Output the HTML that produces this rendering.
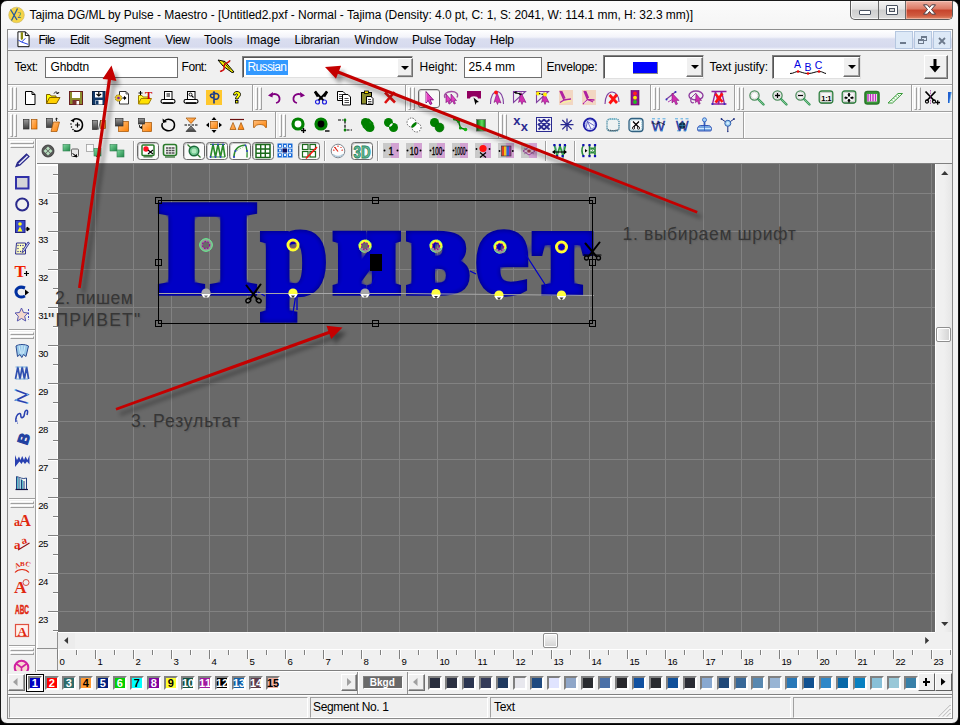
<!DOCTYPE html><html lang="ru"><head><meta charset="utf-8"><title>Tajima DG/ML by Pulse - Maestro</title><style>
*{box-sizing:border-box;margin:0;padding:0}
html,body{width:960px;height:725px;overflow:hidden;background:#000}
body{font-family:"Liberation Sans",sans-serif;font-size:12px;color:#000;position:relative}
.a{position:absolute}
.t{position:absolute;white-space:nowrap;line-height:1}
#win{position:absolute;left:0;top:0;width:960px;height:725px;background:#000}
#frame{position:absolute;left:0;top:0;width:959px;height:724px;border:1px solid #1a1a1a;border-radius:7px 7px 7px 7px;background:linear-gradient(#fbfbfb,#f4f4f4 30px,#f2f2f2);overflow:hidden}
#client{position:absolute;left:8px;top:30px;width:944px;height:688px;background:#f0f0f0}
.sunk{border:1px solid;border-color:#a0a0a0 #fff #fff #a0a0a0}
.rais{border:1px solid;border-color:#fff #a0a0a0 #a0a0a0 #fff}
.inp{position:absolute;background:#fff;border:1px solid #6e6e6e}
.cmb{position:absolute;background:#fff;border:1px solid;border-color:#808080 #e0e0e0 #e0e0e0 #808080;box-shadow:inset 1px 1px 0 #555}
.ddb{position:absolute;background:#f0f0f0;border:1px solid;border-color:#fff #707070 #707070 #fff;box-shadow:inset -1px -1px 0 #a0a0a0}
.ddb:after{content:"";position:absolute;left:50%;top:50%;margin:-2px 0 0 -4px;border:4px solid transparent;border-top:4px solid #000;border-bottom:0}
.hl{position:absolute;height:2px;border-top:1px solid #a0a0a0;border-bottom:1px solid #fff}
.vl{position:absolute;width:2px;border-left:1px solid #a0a0a0;border-right:1px solid #fff}
.grip{position:absolute;width:5px;border-left:1px solid #fff;border-right:1px solid #a0a0a0}
.grip:before{content:"";position:absolute;left:1px;top:0;bottom:0;width:1px;background:#a0a0a0}
.grip:after{content:"";position:absolute;left:1px;top:0;bottom:0;width:0}
svg{position:absolute;overflow:visible}
.privet{position:absolute;left:158.5px;top:167.9px;white-space:nowrap;font-family:"Liberation Serif",serif;font-weight:bold;font-size:124px;line-height:160px;height:160px;color:#00009a;-webkit-text-stroke:7.5px #00009a;letter-spacing:6.3px;transform:scaleX(0.945);transform-origin:0 0;paint-order:stroke fill}
.privet::first-letter{font-size:132px}
</style></head><body><div id="win"><div id="frame"></div><div class="t" style="left:29.5px;top:9px;font-size:12px;color:#000;letter-spacing:-0.034px">Tajima DG/ML by Pulse - Maestro - [Untitled2.pxf - Normal - Tajima (Density: 4.0 pt, C: 1, S: 2041, W: 114.1 mm, H: 32.3 mm)]</div><div id="client"></div><div class="a" style="left:7px;top:29px;width:946px;height:690px;border:1px solid #8a8a8a;border-top-color:#8e8e8e"></div><svg style="left:8px;top:6px" width="18" height="18" viewBox="0 0 18 18"><circle cx="8.500" cy="9" r="7.800" fill="#f5d447" stroke="#c9b45a" stroke-width="0.600"/><path d="M2.500 3.500L9 14M9.500 2.500L3.500 14.500" stroke="#2a5a9a" stroke-width="1.300" fill="none"/><text x="9.300" y="12" font-family="Liberation Serif,serif" font-size="7.500" fill="#2a5a9a">2</text></svg><div class="a" style="left:850px;top:1px;width:103px;height:19px;border:1px solid #5a5a5a;border-top:0;border-radius:0 0 5px 5px;background:linear-gradient(#f4f4f4,#e2e2e2 45%,#cfcfcf 50%,#dcdcdc 100%);box-shadow:inset 0 0 0 1px rgba(255,255,255,.7);overflow:hidden"><div class="a" style="left:27px;top:0;width:1px;height:18px;background:#6a6a6a"></div><div class="a" style="left:54px;top:0;width:1px;height:18px;background:#6a6a6a"></div><div class="a" style="left:55px;top:0;width:47px;height:18px;background:linear-gradient(#eeb0a2,#dc7863 45%,#c6432c 50%,#cf5a3f 80%,#e08a6a 100%);box-shadow:inset 0 0 0 1px rgba(255,220,210,.5)"></div></div><div class="a" style="left:859px;top:10px;width:12px;height:5px;background:#fff;border:1px solid #4a5260;border-radius:1px"></div><div class="a" style="left:886px;top:5px;width:12px;height:10px;background:#fdfdfd;border:1px solid #4a5260;border-radius:1px"></div><div class="a" style="left:889px;top:8px;width:6px;height:4px;background:#d8d8d8;border:1px solid #4a5260"></div><svg style="left:923px;top:4px" width="13" height="11" viewBox="0 0 13 11"><path d="M0.500 0.800h3.800l2.200 2.700 2.200-2.700h3.800l-4 4.700 4 4.700h-3.800l-2.200-2.700-2.200 2.700h-3.800l4-4.700z" fill="#fff" stroke="#4a3a40" stroke-width="1" stroke-linejoin="round"/></svg><div class="a" style="left:8px;top:29px;width:944px;height:1px;background:#8e8e8e"></div><div class="a" style="left:8px;top:30px;width:944px;height:20px;background:linear-gradient(#ffffff 0,#f3f4fa 35%,#dadef0 45%,#d6daee 85%,#f0f2fa 96%,#ffffff 100%)"></div><div class="a" style="left:8px;top:50px;width:944px;height:1px;background:#909090"></div><div class="t" style="left:38.5px;top:33.8px;font-size:12px;letter-spacing:-0.779px;color:#000;">File</div><div class="t" style="left:70.0px;top:33.8px;font-size:12px;letter-spacing:-0.393px;color:#000;">Edit</div><div class="t" style="left:104.0px;top:33.8px;font-size:12px;letter-spacing:-0.255px;color:#000;">Segment</div><div class="t" style="left:165.3px;top:33.8px;font-size:12px;letter-spacing:-0.431px;color:#000;">View</div><div class="t" style="left:204.0px;top:33.8px;font-size:12px;letter-spacing:0.122px;color:#000;">Tools</div><div class="t" style="left:246.6px;top:33.8px;font-size:12px;letter-spacing:0.037px;color:#000;">Image</div><div class="t" style="left:294.6px;top:33.8px;font-size:12px;letter-spacing:-0.212px;color:#000;">Librarian</div><div class="t" style="left:354.4px;top:33.8px;font-size:12px;letter-spacing:0.164px;color:#000;">Window</div><div class="t" style="left:412.0px;top:33.8px;font-size:12px;letter-spacing:-0.166px;color:#000;">Pulse Today</div><div class="t" style="left:490.0px;top:33.8px;font-size:12px;letter-spacing:-0.227px;color:#000;">Help</div><svg style="left:16.500px;top:30.500px" width="13" height="16.500" viewBox="0 0 14 17"><path d="M1 0.500h8l4 4v12H1z" fill="#fff" stroke="#000" stroke-width="1"/><path d="M9 0.500v4h4" fill="none" stroke="#000" stroke-width="1"/><path d="M4 1h2.500v7L5 9.500 4 8z" fill="#8a8a10"/><path d="M1.500 9.500L5 11.500 9 7.500M5 11.500L12 14" stroke="#1030e0" stroke-width="1" fill="none"/></svg><div class="a" style="left:895px;top:31px;width:18px;height:18px;background:#dde9f7;border:1px solid #b5c7e0"></div><div class="a" style="left:914px;top:31px;width:18px;height:18px;background:#dde9f7;border:1px solid #b5c7e0"></div><div class="a" style="left:933px;top:31px;width:18px;height:18px;background:#dde9f7;border:1px solid #b5c7e0"></div><div class="a" style="left:900px;top:42px;width:6px;height:2px;background:#6d7a8c"></div><div class="a" style="left:921px;top:36px;width:6px;height:5px;border:1px solid #6d7a8c;border-top-width:2px"></div><div class="a" style="left:918px;top:39px;width:6px;height:5px;border:1px solid #6d7a8c;border-top-width:2px;background:#dde9f7"></div><svg style="left:938px;top:37px" width="8" height="8" viewBox="0 0 8 8"><path d="M1 1L7 7M7 1L1 7" stroke="#6d7a8c" stroke-width="1.8" fill="none"/></svg><div class="t" style="left:14.5px;top:61.3px;font-size:12px;letter-spacing:-0.410px;color:#000;">Text:</div><div class="inp" style="left:45px;top:57px;width:133px;height:21px;"></div><div class="t" style="left:50.6px;top:60.5px;font-size:12px;letter-spacing:-0.173px;color:#000;">Ghbdtn</div><div class="t" style="left:181.5px;top:61.3px;font-size:12px;letter-spacing:-0.436px;color:#000;">Font:</div><svg style="left:217px;top:58px" width="18" height="16" viewBox="0 0 18 16"><path d="M1 2l7 1.500 9 10.500-2 0.500-9-6.500z" fill="#f4f000" stroke="#000" stroke-width="1"/><path d="M6 3.500l7 8" stroke="#000" stroke-width="0.800"/><path d="M13 2.500c-2 3-6.500 3-6 6s0 4-4 5" fill="none" stroke="#f01010" stroke-width="1.500"/><path d="M13 2.500c-2 3-6.500 3-6 6s0 4-4 5" fill="none" stroke="#000" stroke-width="0.800" stroke-dasharray="1 2.500"/></svg><div class="cmb" style="left:242px;top:56px;width:171px;height:22px;"></div><div class="a" style="left:246px;top:60px;width:42px;height:15px;background:#3399ff"></div><div class="t" style="left:247.5px;top:60.5px;font-size:12px;letter-spacing:-0.642px;color:#fff;">Russian</div><div class="ddb" style="left:397px;top:58px;width:16px;height:19px;"></div><div class="t" style="left:419.5px;top:61.3px;font-size:12px;letter-spacing:-0.004px;color:#000;">Height:</div><div class="inp" style="left:464px;top:57px;width:78px;height:21px;"></div><div class="t" style="left:468.5px;top:60.5px;font-size:12px;letter-spacing:-0.030px;color:#000;">25.4 mm</div><div class="t" style="left:546.5px;top:61.3px;font-size:12px;letter-spacing:-0.297px;color:#000;">Envelope:</div><div class="cmb" style="left:603px;top:55px;width:101px;height:24px;"></div><div class="a" style="left:633px;top:62px;width:25px;height:12px;background:#0000ff;border-right:1px solid #888;border-bottom:1px solid #888"></div><div class="ddb" style="left:686px;top:57px;width:17px;height:20px;"></div><div class="t" style="left:709.5px;top:61.3px;font-size:12px;letter-spacing:-0.071px;color:#000;">Text justify:</div><div class="cmb" style="left:772px;top:55px;width:89px;height:24px;"></div><div class="ddb" style="left:843px;top:57px;width:17px;height:20px;"></div><div class="t" style="left:794.0px;top:59.3px;font-size:10.5px;color:#0000e0;">A</div><div class="t" style="left:804.5px;top:61.9px;font-size:10.5px;color:#0000e0;">B</div><div class="t" style="left:814.7px;top:59.6px;font-size:10.5px;color:#0000e0;">C</div><svg style="left:788px;top:68px" width="40" height="10" viewBox="0 0 40 10"><path d="M2 5.500C6 5.500 7 3.500 10 3.500S15 5.500 20 5.500S27 3.500 31 3.500S35 5 38 5.500" stroke="#000" stroke-width="1" fill="none"/><circle cx="10" cy="3.5" r="1.3" fill="#e00"/><circle cx="20" cy="5.5" r="1.3" fill="#e00"/><circle cx="31" cy="3.500" r="1.300" fill="#e00"/></svg><div class="a" style="left:924px;top:55px;width:24px;height:24px;background:#f0f0f0;border:1px solid;border-color:#fff #696969 #696969 #fff;box-shadow:inset -1px -1px 0 #a0a0a0"></div><svg style="left:929px;top:59px" width="12" height="14" viewBox="0 0 12 14"><path d="M4.5 0h3v7h4L6 13.5 0.500 7h4z" fill="#000"/></svg><div class="a" style="left:8px;top:84px;width:944px;height:1px;background:#a0a0a0"></div><div class="a" style="left:8px;top:85px;width:944px;height:1px;background:#fff"></div><div class="a" style="left:8px;top:111px;width:944px;height:1px;background:#a0a0a0"></div><div class="a" style="left:8px;top:112px;width:944px;height:1px;background:#fff"></div><div class="a" style="left:8px;top:138px;width:944px;height:1px;background:#a0a0a0"></div><div class="a" style="left:8px;top:139px;width:944px;height:1px;background:#fff"></div><div class="a" style="left:8px;top:674px;width:17px;height:17px;background:#f0f0f0;border:1px solid;border-color:#fff #707070 #707070 #fff;box-shadow:inset -1px -1px 0 #a0a0a0"></div><svg style="left:13px;top:677.500px" width="4.500" height="8" viewBox="0 0 5 9"><path d="M5 0L0 4.500L5 9z" fill="#a0a0a0"/></svg><div class="a" style="left:28px;top:676px;width:14px;height:14px;background:#0000c0;border:2px solid;border-color:#808080 #fff #fff #808080"></div><div class="t" style="left:31.8px;top:677.9px;font-size:11px;color:#fff;font-weight:bold;">1</div><div class="a" style="left:45px;top:676px;width:14px;height:14px;background:#ff0000;border:2px solid;border-color:#808080 #fff #fff #808080"></div><div class="t" style="left:48.8px;top:677.9px;font-size:11px;color:#fff;font-weight:bold;">2</div><div class="a" style="left:62px;top:676px;width:14px;height:14px;background:#2d6b6b;border:2px solid;border-color:#808080 #fff #fff #808080"></div><div class="t" style="left:65.8px;top:677.9px;font-size:11px;color:#fff;font-weight:bold;">3</div><div class="a" style="left:79px;top:676px;width:14px;height:14px;background:#ff9933;border:2px solid;border-color:#808080 #fff #fff #808080"></div><div class="t" style="left:82.8px;top:677.9px;font-size:11px;color:#000;font-weight:bold;">4</div><div class="a" style="left:96px;top:676px;width:14px;height:14px;background:#002080;border:2px solid;border-color:#808080 #fff #fff #808080"></div><div class="t" style="left:99.8px;top:677.9px;font-size:11px;color:#fff;font-weight:bold;">5</div><div class="a" style="left:113px;top:676px;width:14px;height:14px;background:#00d000;border:2px solid;border-color:#808080 #fff #fff #808080"></div><div class="t" style="left:116.8px;top:677.9px;font-size:11px;color:#fff;font-weight:bold;">6</div><div class="a" style="left:130px;top:676px;width:14px;height:14px;background:#00ffff;border:2px solid;border-color:#808080 #fff #fff #808080"></div><div class="t" style="left:133.8px;top:677.9px;font-size:11px;color:#000;font-weight:bold;">7</div><div class="a" style="left:147px;top:676px;width:14px;height:14px;background:#8000a0;border:2px solid;border-color:#808080 #fff #fff #808080"></div><div class="t" style="left:150.8px;top:677.9px;font-size:11px;color:#fff;font-weight:bold;">8</div><div class="a" style="left:164px;top:676px;width:14px;height:14px;background:#ffff30;border:2px solid;border-color:#808080 #fff #fff #808080"></div><div class="t" style="left:167.8px;top:677.9px;font-size:11px;color:#000;font-weight:bold;">9</div><div class="a" style="left:181px;top:676px;width:14px;height:14px;background:#0f5040;border:2px solid;border-color:#808080 #fff #fff #808080"></div><div class="t" style="left:182.0px;top:677.9px;font-size:11px;letter-spacing:-0.236px;color:#fff;font-weight:bold;">10</div><div class="a" style="left:198px;top:676px;width:14px;height:14px;background:#a018a0;border:2px solid;border-color:#808080 #fff #fff #808080"></div><div class="t" style="left:199.0px;top:677.9px;font-size:11px;letter-spacing:0.370px;color:#fff;font-weight:bold;">11</div><div class="a" style="left:215px;top:676px;width:14px;height:14px;background:#000000;border:2px solid;border-color:#808080 #fff #fff #808080"></div><div class="t" style="left:216.0px;top:677.9px;font-size:11px;letter-spacing:-0.236px;color:#fff;font-weight:bold;">12</div><div class="a" style="left:232px;top:676px;width:14px;height:14px;background:#1060a8;border:2px solid;border-color:#808080 #fff #fff #808080"></div><div class="t" style="left:233.0px;top:677.9px;font-size:11px;letter-spacing:-0.236px;color:#fff;font-weight:bold;">13</div><div class="a" style="left:249px;top:676px;width:14px;height:14px;background:#5c3c4c;border:2px solid;border-color:#808080 #fff #fff #808080"></div><div class="t" style="left:250.0px;top:677.9px;font-size:11px;letter-spacing:-0.236px;color:#fff;font-weight:bold;">14</div><div class="a" style="left:266px;top:676px;width:14px;height:14px;background:#f0b0a0;border:2px solid;border-color:#808080 #fff #fff #808080"></div><div class="t" style="left:267.0px;top:677.9px;font-size:11px;letter-spacing:-0.236px;color:#000;font-weight:bold;">15</div><div class="a" style="left:26px;top:674px;width:18px;height:18px;border:1px solid #000"></div><div class="a" style="left:27px;top:675px;width:16px;height:16px;border:1px solid #fff"></div><div class="a" style="left:341px;top:674px;width:16px;height:17px;background:#f0f0f0;border:1px solid;border-color:#fff #707070 #707070 #fff;box-shadow:inset -1px -1px 0 #a0a0a0"></div><svg style="left:347px;top:677.500px" width="4.500" height="8" viewBox="0 0 5 9"><path d="M0 0L5 4.500L0 9z" fill="#a0a0a0"/></svg><div class="a" style="left:357px;top:672px;width:1px;height:22px;background:#909090"></div><div class="a" style="left:358px;top:672px;width:1px;height:22px;background:#fff"></div><div class="a" style="left:363px;top:676px;width:40px;height:13px;background:#696969;border:1px solid;border-color:#808080 #fff #fff #808080"></div><div class="t" style="left:369.8px;top:678.1px;font-size:10px;letter-spacing:0.000px;color:#fff;font-weight:bold;">Bkgd</div><div class="a" style="left:407px;top:672px;width:1px;height:22px;background:#909090"></div><div class="a" style="left:408px;top:674px;width:17px;height:17px;background:#f0f0f0;border:1px solid;border-color:#fff #707070 #707070 #fff;box-shadow:inset -1px -1px 0 #a0a0a0"></div><svg style="left:413px;top:677.500px" width="4.500" height="8" viewBox="0 0 5 9"><path d="M5 0L0 4.500L5 9z" fill="#a0a0a0"/></svg><div class="a" style="left:428px;top:676px;width:14px;height:14px;background:#2a2f3f;border:2px solid;border-color:#808080 #fff #fff #808080"></div><div class="a" style="left:445px;top:676px;width:14px;height:14px;background:#2c3142;border:2px solid;border-color:#808080 #fff #fff #808080"></div><div class="a" style="left:462px;top:676px;width:14px;height:14px;background:#2a3450;border:2px solid;border-color:#808080 #fff #fff #808080"></div><div class="a" style="left:479px;top:676px;width:14px;height:14px;background:#353c5a;border:2px solid;border-color:#808080 #fff #fff #808080"></div><div class="a" style="left:496px;top:676px;width:14px;height:14px;background:#203a60;border:2px solid;border-color:#808080 #fff #fff #808080"></div><div class="a" style="left:513px;top:676px;width:14px;height:14px;background:#e8e8ee;border:2px solid;border-color:#808080 #fff #fff #808080"></div><div class="a" style="left:530px;top:676px;width:14px;height:14px;background:#1f4a80;border:2px solid;border-color:#808080 #fff #fff #808080"></div><div class="a" style="left:547px;top:676px;width:14px;height:14px;background:#e0e4ff;border:2px solid;border-color:#808080 #fff #fff #808080"></div><div class="a" style="left:564px;top:676px;width:14px;height:14px;background:#8fa6c8;border:2px solid;border-color:#808080 #fff #fff #808080"></div><div class="a" style="left:581px;top:676px;width:14px;height:14px;background:#2a2c30;border:2px solid;border-color:#808080 #fff #fff #808080"></div><div class="a" style="left:598px;top:676px;width:14px;height:14px;background:#4a70a8;border:2px solid;border-color:#808080 #fff #fff #808080"></div><div class="a" style="left:615px;top:676px;width:14px;height:14px;background:#28282c;border:2px solid;border-color:#808080 #fff #fff #808080"></div><div class="a" style="left:632px;top:676px;width:14px;height:14px;background:#1050a0;border:2px solid;border-color:#808080 #fff #fff #808080"></div><div class="a" style="left:649px;top:676px;width:14px;height:14px;background:#2a2c30;border:2px solid;border-color:#808080 #fff #fff #808080"></div><div class="a" style="left:666px;top:676px;width:14px;height:14px;background:#10509a;border:2px solid;border-color:#808080 #fff #fff #808080"></div><div class="a" style="left:683px;top:676px;width:14px;height:14px;background:#2a2c34;border:2px solid;border-color:#808080 #fff #fff #808080"></div><div class="a" style="left:700px;top:676px;width:14px;height:14px;background:#88a8d0;border:2px solid;border-color:#808080 #fff #fff #808080"></div><div class="a" style="left:717px;top:676px;width:14px;height:14px;background:#204878;border:2px solid;border-color:#808080 #fff #fff #808080"></div><div class="a" style="left:734px;top:676px;width:14px;height:14px;background:#386898;border:2px solid;border-color:#808080 #fff #fff #808080"></div><div class="a" style="left:751px;top:676px;width:14px;height:14px;background:#5888b0;border:2px solid;border-color:#808080 #fff #fff #808080"></div><div class="a" style="left:768px;top:676px;width:14px;height:14px;background:#98b4d4;border:2px solid;border-color:#808080 #fff #fff #808080"></div><div class="a" style="left:785px;top:676px;width:14px;height:14px;background:#2878b8;border:2px solid;border-color:#808080 #fff #fff #808080"></div><div class="a" style="left:802px;top:676px;width:14px;height:14px;background:#105090;border:2px solid;border-color:#808080 #fff #fff #808080"></div><div class="a" style="left:819px;top:676px;width:14px;height:14px;background:#3088c8;border:2px solid;border-color:#808080 #fff #fff #808080"></div><div class="a" style="left:836px;top:676px;width:14px;height:14px;background:#0868a8;border:2px solid;border-color:#808080 #fff #fff #808080"></div><div class="a" style="left:853px;top:676px;width:14px;height:14px;background:#0880c0;border:2px solid;border-color:#808080 #fff #fff #808080"></div><div class="a" style="left:870px;top:676px;width:14px;height:14px;background:#88c0d8;border:2px solid;border-color:#808080 #fff #fff #808080"></div><div class="a" style="left:887px;top:676px;width:14px;height:14px;background:#98c8d8;border:2px solid;border-color:#808080 #fff #fff #808080"></div><div class="a" style="left:904px;top:676px;width:14px;height:14px;background:#3880a8;border:2px solid;border-color:#808080 #fff #fff #808080"></div><div class="a" style="left:918px;top:673px;width:17px;height:18px;background:#f0f0f0;border:1px solid;border-color:#fff #606060 #606060 #fff"></div><div class="a" style="left:922.5px;top:681px;width:7px;height:2px;background:#000"></div><div class="a" style="left:925px;top:678px;width:2px;height:8px;background:#000"></div><div class="a" style="left:935px;top:673px;width:17px;height:18px;background:#f0f0f0;border:1px solid;border-color:#fff #606060 #606060 #fff"></div><svg style="left:940.500px;top:678px" width="4.500" height="7.500" viewBox="0 0 6 10"><path d="M0 0L6 5L0 10z" fill="#000"/></svg><div class="a" style="left:8px;top:694px;width:944px;height:1px;background:#808080"></div><div class="a" style="left:8px;top:695px;width:944px;height:1px;background:#fff"></div><div class="a" style="left:9px;top:697px;width:299px;height:21px;border:1px solid;border-color:#a0a0a0 #fff #fff #a0a0a0"></div><div class="a" style="left:310px;top:697px;width:178px;height:21px;border:1px solid;border-color:#a0a0a0 #fff #fff #a0a0a0"></div><div class="a" style="left:490px;top:697px;width:301px;height:21px;border:1px solid;border-color:#a0a0a0 #fff #fff #a0a0a0"></div><div class="a" style="left:793px;top:697px;width:159px;height:21px;border:1px solid;border-color:#a0a0a0 #fff #fff #a0a0a0"></div><div class="t" style="left:313.0px;top:700.8px;font-size:12px;letter-spacing:-0.337px;color:#000;">Segment No. 1</div><div class="t" style="left:494.0px;top:700.8px;font-size:12px;letter-spacing:-0.336px;color:#000;">Text</div><svg style="left:938px;top:704px" width="13" height="13" viewBox="0 0 13 13"><path d="M12.500 1L1 12.500M12.500 5L5 12.500M12.500 9L9 12.500" stroke="#a0a0a0" stroke-width="1"/><path d="M12.500 2L2 12.500M12.500 6L6 12.500M12.500 10L10 12.500" stroke="#fff" stroke-width="1"/></svg><div class="a" style="left:35px;top:139px;width:1px;height:533px;background:#a0a0a0"></div><div class="a" style="left:36px;top:139px;width:1px;height:533px;background:#fff"></div><div class="a" style="left:37px;top:163px;width:915px;height:1px;background:#808080"></div><div class="a" style="left:37px;top:164px;width:21px;height:485px;background:#f0f0f0;border-left:1px solid #fff;border-top:2px solid #fff"></div><div class="a" style="left:57px;top:166px;width:1px;height:465px;background:#fff"></div><svg style="left:58px;top:164px" width="877" height="468" viewBox="58 164 877 468" shape-rendering="crispEdges"><rect x="58" y="164" width="877" height="468" fill="#696969"/><path d="M95.5 164V632M133.5 164V632M171.5 164V632M209.5 164V632M247.5 164V632M285.5 164V632M323.5 164V632M361.5 164V632M399.5 164V632M437.5 164V632M475.5 164V632M513.5 164V632M551.5 164V632M589.5 164V632M627.5 164V632M665.5 164V632M703.5 164V632M741.5 164V632M779.5 164V632M817.5 164V632M855.5 164V632M893.5 164V632M931.5 164V632M58 193.5H935M58 231.5H935M58 269.5H935M58 307.5H935M58 345.5H935M58 383.5H935M58 421.5H935M58 459.5H935M58 497.5H935M58 535.5H935M58 573.5H935M58 611.5H935" stroke="#828282" stroke-width="1" fill="none"/></svg><div class="a" style="left:48px;top:193px;width:10px;height:1px;background:#808080"></div><div class="a" style="left:48px;top:194px;width:10px;height:1px;background:#fff"></div><div class="t" style="left:38.3px;top:197.1px;font-size:9.6px;letter-spacing:-0.677px;color:#000;">34</div><div class="a" style="left:48px;top:231px;width:10px;height:1px;background:#808080"></div><div class="a" style="left:48px;top:232px;width:10px;height:1px;background:#fff"></div><div class="t" style="left:38.3px;top:235.1px;font-size:9.6px;letter-spacing:-0.677px;color:#000;">33</div><div class="a" style="left:48px;top:269px;width:10px;height:1px;background:#808080"></div><div class="a" style="left:48px;top:270px;width:10px;height:1px;background:#fff"></div><div class="t" style="left:38.3px;top:273.1px;font-size:9.6px;letter-spacing:-0.677px;color:#000;">32</div><div class="a" style="left:48px;top:307px;width:10px;height:1px;background:#808080"></div><div class="a" style="left:48px;top:308px;width:10px;height:1px;background:#fff"></div><div class="t" style="left:38.3px;top:311.1px;font-size:9.6px;letter-spacing:-0.677px;color:#000;">31</div><div class="a" style="left:48px;top:345px;width:10px;height:1px;background:#808080"></div><div class="a" style="left:48px;top:346px;width:10px;height:1px;background:#fff"></div><div class="t" style="left:38.3px;top:349.1px;font-size:9.6px;letter-spacing:-0.677px;color:#000;">30</div><div class="a" style="left:48px;top:383px;width:10px;height:1px;background:#808080"></div><div class="a" style="left:48px;top:384px;width:10px;height:1px;background:#fff"></div><div class="t" style="left:38.3px;top:387.1px;font-size:9.6px;letter-spacing:-0.677px;color:#000;">29</div><div class="a" style="left:48px;top:421px;width:10px;height:1px;background:#808080"></div><div class="a" style="left:48px;top:422px;width:10px;height:1px;background:#fff"></div><div class="t" style="left:38.3px;top:425.1px;font-size:9.6px;letter-spacing:-0.677px;color:#000;">28</div><div class="a" style="left:48px;top:459px;width:10px;height:1px;background:#808080"></div><div class="a" style="left:48px;top:460px;width:10px;height:1px;background:#fff"></div><div class="t" style="left:38.3px;top:463.1px;font-size:9.6px;letter-spacing:-0.677px;color:#000;">27</div><div class="a" style="left:48px;top:497px;width:10px;height:1px;background:#808080"></div><div class="a" style="left:48px;top:498px;width:10px;height:1px;background:#fff"></div><div class="t" style="left:38.3px;top:501.1px;font-size:9.6px;letter-spacing:-0.677px;color:#000;">26</div><div class="a" style="left:48px;top:535px;width:10px;height:1px;background:#808080"></div><div class="a" style="left:48px;top:536px;width:10px;height:1px;background:#fff"></div><div class="t" style="left:38.3px;top:539.1px;font-size:9.6px;letter-spacing:-0.677px;color:#000;">25</div><div class="a" style="left:48px;top:573px;width:10px;height:1px;background:#808080"></div><div class="a" style="left:48px;top:574px;width:10px;height:1px;background:#fff"></div><div class="t" style="left:38.3px;top:577.1px;font-size:9.6px;letter-spacing:-0.677px;color:#000;">24</div><div class="a" style="left:48px;top:611px;width:10px;height:1px;background:#808080"></div><div class="a" style="left:48px;top:612px;width:10px;height:1px;background:#fff"></div><div class="t" style="left:38.3px;top:615.1px;font-size:9.6px;letter-spacing:-0.677px;color:#000;">23</div><div class="a" style="left:53px;top:174px;width:5px;height:1px;background:#808080"></div><div class="a" style="left:53px;top:175px;width:5px;height:1px;background:#fff"></div><div class="a" style="left:53px;top:212px;width:5px;height:1px;background:#808080"></div><div class="a" style="left:53px;top:213px;width:5px;height:1px;background:#fff"></div><div class="a" style="left:53px;top:250px;width:5px;height:1px;background:#808080"></div><div class="a" style="left:53px;top:251px;width:5px;height:1px;background:#fff"></div><div class="a" style="left:53px;top:288px;width:5px;height:1px;background:#808080"></div><div class="a" style="left:53px;top:289px;width:5px;height:1px;background:#fff"></div><div class="a" style="left:53px;top:326px;width:5px;height:1px;background:#808080"></div><div class="a" style="left:53px;top:327px;width:5px;height:1px;background:#fff"></div><div class="a" style="left:53px;top:364px;width:5px;height:1px;background:#808080"></div><div class="a" style="left:53px;top:365px;width:5px;height:1px;background:#fff"></div><div class="a" style="left:53px;top:402px;width:5px;height:1px;background:#808080"></div><div class="a" style="left:53px;top:403px;width:5px;height:1px;background:#fff"></div><div class="a" style="left:53px;top:440px;width:5px;height:1px;background:#808080"></div><div class="a" style="left:53px;top:441px;width:5px;height:1px;background:#fff"></div><div class="a" style="left:53px;top:478px;width:5px;height:1px;background:#808080"></div><div class="a" style="left:53px;top:479px;width:5px;height:1px;background:#fff"></div><div class="a" style="left:53px;top:516px;width:5px;height:1px;background:#808080"></div><div class="a" style="left:53px;top:517px;width:5px;height:1px;background:#fff"></div><div class="a" style="left:53px;top:554px;width:5px;height:1px;background:#808080"></div><div class="a" style="left:53px;top:555px;width:5px;height:1px;background:#fff"></div><div class="a" style="left:53px;top:592px;width:5px;height:1px;background:#808080"></div><div class="a" style="left:53px;top:593px;width:5px;height:1px;background:#fff"></div><div class="a" style="left:53px;top:630px;width:5px;height:1px;background:#808080"></div><div class="a" style="left:53px;top:631px;width:5px;height:1px;background:#fff"></div><div class="a" style="left:935px;top:164px;width:17px;height:468px;background:#f0f0f0;border-left:1px solid #fff"></div><div class="a" style="left:944px;top:164px;width:8px;height:468px;background:linear-gradient(90deg,#f0f0f0,#e6e6e6)"></div><svg style="left:940.500px;top:171px" width="7.500" height="4" viewBox="0 0 9 5"><path d="M0 5L4.500 0L9 5z" fill="#383838"/></svg><svg style="left:940.700px;top:622px" width="7.500" height="4" viewBox="0 0 9 5"><path d="M0 0L4.500 5L9 0z" fill="#383838"/></svg><div class="a" style="left:936px;top:327px;width:15px;height:15px;background:linear-gradient(90deg,#f6f6f6,#e4e4e4 50%,#d2d2d2);border:1px solid #8e8e8e;border-radius:2px;box-shadow:inset 0 0 0 1px #fff"></div><div class="a" style="left:58px;top:632px;width:877px;height:17px;background:#f0f0f0;border-top:1px solid #fff"></div><div class="a" style="left:58px;top:633px;width:17px;height:16px;background:#ececec"></div><svg style="left:64px;top:637px" width="4.300" height="7" viewBox="0 0 5 9"><path d="M5 0L0 4.500L5 9z" fill="#383838"/></svg><svg style="left:924.800px;top:637px" width="4.300" height="7" viewBox="0 0 5 9"><path d="M0 0L5 4.500L0 9z" fill="#383838"/></svg><div class="a" style="left:543px;top:633px;width:15px;height:15px;background:linear-gradient(#f6f6f6,#e4e4e4 50%,#d2d2d2);border:1px solid #8e8e8e;border-radius:2px;box-shadow:inset 0 0 0 1px #fff"></div><div class="a" style="left:935px;top:632px;width:17px;height:17px;background:#f0f0f0"></div><div class="a" style="left:37px;top:648px;width:21px;height:1px;background:#909090"></div><div class="a" style="left:57px;top:632px;width:1px;height:39px;background:#909090"></div><div class="a" style="left:58px;top:649px;width:894px;height:1px;background:#fff"></div><div class="a" style="left:37px;top:670px;width:915px;height:1px;background:#808080"></div><div class="a" style="left:37px;top:671px;width:915px;height:1px;background:#fff"></div><div class="a" style="left:57px;top:650px;width:1px;height:9px;background:#808080"></div><div class="a" style="left:58px;top:650px;width:1px;height:9px;background:#fff"></div><div class="t" style="left:59.6px;top:657.1px;font-size:9.6px;letter-spacing:-0.739px;color:#000;">0</div><div class="a" style="left:76px;top:650px;width:1px;height:5px;background:#808080"></div><div class="a" style="left:77px;top:650px;width:1px;height:5px;background:#fff"></div><div class="a" style="left:95px;top:650px;width:1px;height:9px;background:#808080"></div><div class="a" style="left:96px;top:650px;width:1px;height:9px;background:#fff"></div><div class="t" style="left:97.6px;top:657.1px;font-size:9.6px;letter-spacing:-0.739px;color:#000;">1</div><div class="a" style="left:114px;top:650px;width:1px;height:5px;background:#808080"></div><div class="a" style="left:115px;top:650px;width:1px;height:5px;background:#fff"></div><div class="a" style="left:133px;top:650px;width:1px;height:9px;background:#808080"></div><div class="a" style="left:134px;top:650px;width:1px;height:9px;background:#fff"></div><div class="t" style="left:135.6px;top:657.1px;font-size:9.6px;letter-spacing:-0.739px;color:#000;">2</div><div class="a" style="left:152px;top:650px;width:1px;height:5px;background:#808080"></div><div class="a" style="left:153px;top:650px;width:1px;height:5px;background:#fff"></div><div class="a" style="left:171px;top:650px;width:1px;height:9px;background:#808080"></div><div class="a" style="left:172px;top:650px;width:1px;height:9px;background:#fff"></div><div class="t" style="left:173.6px;top:657.1px;font-size:9.6px;letter-spacing:-0.739px;color:#000;">3</div><div class="a" style="left:190px;top:650px;width:1px;height:5px;background:#808080"></div><div class="a" style="left:191px;top:650px;width:1px;height:5px;background:#fff"></div><div class="a" style="left:209px;top:650px;width:1px;height:9px;background:#808080"></div><div class="a" style="left:210px;top:650px;width:1px;height:9px;background:#fff"></div><div class="t" style="left:211.6px;top:657.1px;font-size:9.6px;letter-spacing:-0.739px;color:#000;">4</div><div class="a" style="left:228px;top:650px;width:1px;height:5px;background:#808080"></div><div class="a" style="left:229px;top:650px;width:1px;height:5px;background:#fff"></div><div class="a" style="left:247px;top:650px;width:1px;height:9px;background:#808080"></div><div class="a" style="left:248px;top:650px;width:1px;height:9px;background:#fff"></div><div class="t" style="left:249.6px;top:657.1px;font-size:9.6px;letter-spacing:-0.739px;color:#000;">5</div><div class="a" style="left:266px;top:650px;width:1px;height:5px;background:#808080"></div><div class="a" style="left:267px;top:650px;width:1px;height:5px;background:#fff"></div><div class="a" style="left:285px;top:650px;width:1px;height:9px;background:#808080"></div><div class="a" style="left:286px;top:650px;width:1px;height:9px;background:#fff"></div><div class="t" style="left:287.6px;top:657.1px;font-size:9.6px;letter-spacing:-0.739px;color:#000;">6</div><div class="a" style="left:304px;top:650px;width:1px;height:5px;background:#808080"></div><div class="a" style="left:305px;top:650px;width:1px;height:5px;background:#fff"></div><div class="a" style="left:323px;top:650px;width:1px;height:9px;background:#808080"></div><div class="a" style="left:324px;top:650px;width:1px;height:9px;background:#fff"></div><div class="t" style="left:325.6px;top:657.1px;font-size:9.6px;letter-spacing:-0.739px;color:#000;">7</div><div class="a" style="left:342px;top:650px;width:1px;height:5px;background:#808080"></div><div class="a" style="left:343px;top:650px;width:1px;height:5px;background:#fff"></div><div class="a" style="left:361px;top:650px;width:1px;height:9px;background:#808080"></div><div class="a" style="left:362px;top:650px;width:1px;height:9px;background:#fff"></div><div class="t" style="left:363.6px;top:657.1px;font-size:9.6px;letter-spacing:-0.739px;color:#000;">8</div><div class="a" style="left:380px;top:650px;width:1px;height:5px;background:#808080"></div><div class="a" style="left:381px;top:650px;width:1px;height:5px;background:#fff"></div><div class="a" style="left:399px;top:650px;width:1px;height:9px;background:#808080"></div><div class="a" style="left:400px;top:650px;width:1px;height:9px;background:#fff"></div><div class="t" style="left:401.6px;top:657.1px;font-size:9.6px;letter-spacing:-0.739px;color:#000;">9</div><div class="a" style="left:418px;top:650px;width:1px;height:5px;background:#808080"></div><div class="a" style="left:419px;top:650px;width:1px;height:5px;background:#fff"></div><div class="a" style="left:437px;top:650px;width:1px;height:9px;background:#808080"></div><div class="a" style="left:438px;top:650px;width:1px;height:9px;background:#fff"></div><div class="t" style="left:439.6px;top:657.1px;font-size:9.6px;letter-spacing:-0.677px;color:#000;">10</div><div class="a" style="left:456px;top:650px;width:1px;height:5px;background:#808080"></div><div class="a" style="left:457px;top:650px;width:1px;height:5px;background:#fff"></div><div class="a" style="left:475px;top:650px;width:1px;height:9px;background:#808080"></div><div class="a" style="left:476px;top:650px;width:1px;height:9px;background:#fff"></div><div class="t" style="left:477.6px;top:657.1px;font-size:9.6px;letter-spacing:0.035px;color:#000;">11</div><div class="a" style="left:494px;top:650px;width:1px;height:5px;background:#808080"></div><div class="a" style="left:495px;top:650px;width:1px;height:5px;background:#fff"></div><div class="a" style="left:513px;top:650px;width:1px;height:9px;background:#808080"></div><div class="a" style="left:514px;top:650px;width:1px;height:9px;background:#fff"></div><div class="t" style="left:515.6px;top:657.1px;font-size:9.6px;letter-spacing:-0.677px;color:#000;">12</div><div class="a" style="left:532px;top:650px;width:1px;height:5px;background:#808080"></div><div class="a" style="left:533px;top:650px;width:1px;height:5px;background:#fff"></div><div class="a" style="left:551px;top:650px;width:1px;height:9px;background:#808080"></div><div class="a" style="left:552px;top:650px;width:1px;height:9px;background:#fff"></div><div class="t" style="left:553.6px;top:657.1px;font-size:9.6px;letter-spacing:-0.677px;color:#000;">13</div><div class="a" style="left:570px;top:650px;width:1px;height:5px;background:#808080"></div><div class="a" style="left:571px;top:650px;width:1px;height:5px;background:#fff"></div><div class="a" style="left:589px;top:650px;width:1px;height:9px;background:#808080"></div><div class="a" style="left:590px;top:650px;width:1px;height:9px;background:#fff"></div><div class="t" style="left:591.6px;top:657.1px;font-size:9.6px;letter-spacing:-0.677px;color:#000;">14</div><div class="a" style="left:608px;top:650px;width:1px;height:5px;background:#808080"></div><div class="a" style="left:609px;top:650px;width:1px;height:5px;background:#fff"></div><div class="a" style="left:627px;top:650px;width:1px;height:9px;background:#808080"></div><div class="a" style="left:628px;top:650px;width:1px;height:9px;background:#fff"></div><div class="t" style="left:629.6px;top:657.1px;font-size:9.6px;letter-spacing:-0.677px;color:#000;">15</div><div class="a" style="left:646px;top:650px;width:1px;height:5px;background:#808080"></div><div class="a" style="left:647px;top:650px;width:1px;height:5px;background:#fff"></div><div class="a" style="left:665px;top:650px;width:1px;height:9px;background:#808080"></div><div class="a" style="left:666px;top:650px;width:1px;height:9px;background:#fff"></div><div class="t" style="left:667.6px;top:657.1px;font-size:9.6px;letter-spacing:-0.677px;color:#000;">16</div><div class="a" style="left:684px;top:650px;width:1px;height:5px;background:#808080"></div><div class="a" style="left:685px;top:650px;width:1px;height:5px;background:#fff"></div><div class="a" style="left:703px;top:650px;width:1px;height:9px;background:#808080"></div><div class="a" style="left:704px;top:650px;width:1px;height:9px;background:#fff"></div><div class="t" style="left:705.6px;top:657.1px;font-size:9.6px;letter-spacing:-0.677px;color:#000;">17</div><div class="a" style="left:722px;top:650px;width:1px;height:5px;background:#808080"></div><div class="a" style="left:723px;top:650px;width:1px;height:5px;background:#fff"></div><div class="a" style="left:741px;top:650px;width:1px;height:9px;background:#808080"></div><div class="a" style="left:742px;top:650px;width:1px;height:9px;background:#fff"></div><div class="t" style="left:743.6px;top:657.1px;font-size:9.6px;letter-spacing:-0.677px;color:#000;">18</div><div class="a" style="left:760px;top:650px;width:1px;height:5px;background:#808080"></div><div class="a" style="left:761px;top:650px;width:1px;height:5px;background:#fff"></div><div class="a" style="left:779px;top:650px;width:1px;height:9px;background:#808080"></div><div class="a" style="left:780px;top:650px;width:1px;height:9px;background:#fff"></div><div class="t" style="left:781.6px;top:657.1px;font-size:9.6px;letter-spacing:-0.677px;color:#000;">19</div><div class="a" style="left:798px;top:650px;width:1px;height:5px;background:#808080"></div><div class="a" style="left:799px;top:650px;width:1px;height:5px;background:#fff"></div><div class="a" style="left:817px;top:650px;width:1px;height:9px;background:#808080"></div><div class="a" style="left:818px;top:650px;width:1px;height:9px;background:#fff"></div><div class="t" style="left:819.6px;top:657.1px;font-size:9.6px;letter-spacing:-0.677px;color:#000;">20</div><div class="a" style="left:836px;top:650px;width:1px;height:5px;background:#808080"></div><div class="a" style="left:837px;top:650px;width:1px;height:5px;background:#fff"></div><div class="a" style="left:855px;top:650px;width:1px;height:9px;background:#808080"></div><div class="a" style="left:856px;top:650px;width:1px;height:9px;background:#fff"></div><div class="t" style="left:857.6px;top:657.1px;font-size:9.6px;letter-spacing:-0.677px;color:#000;">21</div><div class="a" style="left:874px;top:650px;width:1px;height:5px;background:#808080"></div><div class="a" style="left:875px;top:650px;width:1px;height:5px;background:#fff"></div><div class="a" style="left:893px;top:650px;width:1px;height:9px;background:#808080"></div><div class="a" style="left:894px;top:650px;width:1px;height:9px;background:#fff"></div><div class="t" style="left:895.6px;top:657.1px;font-size:9.6px;letter-spacing:-0.677px;color:#000;">22</div><div class="a" style="left:912px;top:650px;width:1px;height:5px;background:#808080"></div><div class="a" style="left:913px;top:650px;width:1px;height:5px;background:#fff"></div><div class="a" style="left:931px;top:650px;width:1px;height:9px;background:#808080"></div><div class="a" style="left:932px;top:650px;width:1px;height:9px;background:#fff"></div><div class="t" style="left:933.6px;top:657.1px;font-size:9.6px;letter-spacing:-0.677px;color:#000;">23</div><div class="a" style="left:950px;top:650px;width:1px;height:5px;background:#808080"></div><div class="a" style="left:951px;top:650px;width:1px;height:5px;background:#fff"></div><svg style="left:0;top:0" width="0" height="0"><defs><filter id="emb" x="-5%" y="-5%" width="110%" height="110%"><feGaussianBlur in="SourceAlpha" stdDeviation="3.500" result="b"/><feComponentTransfer in="b" result="c"><feFuncA type="linear" slope="2.200" intercept="-1.050"/></feComponentTransfer><feFlood flood-color="#0000c6" result="f"/><feComposite in="f" in2="c" operator="in" result="g"/><feMerge><feMergeNode in="SourceGraphic"/><feMergeNode in="g"/></feMerge></filter></defs></svg><div id="word" class="a" style="left:0;top:0;width:960px;height:400px;overflow:visible;filter:url(#emb)"><div class="privet">Привет</div></div><svg style="left:0;top:0" width="960" height="725" viewBox="0 0 960 725"><defs><filter id="sh" x="-20%" y="-20%" width="150%" height="150%"><feGaussianBlur stdDeviation="2.2"/></filter></defs><path d="M296 294L292.500 316M297 296L297 310M470 271L476 274M526 255L546 286M383 262L371 286M258 292L265 296" stroke="#0000c8" stroke-width="1.3" fill="none"/><path d="M158 293.500H400L594 295.500" stroke="#a8a8a8" stroke-width="1" fill="none"/><rect x="158.500" y="200.500" width="434" height="123" fill="none" stroke="#000" stroke-width="1" shape-rendering="crispEdges"/><rect x="155.5" y="197.5" width="6" height="6" fill="none" stroke="#000" stroke-width="1" shape-rendering="crispEdges"/><rect x="372.5" y="197.5" width="6" height="6" fill="none" stroke="#000" stroke-width="1" shape-rendering="crispEdges"/><rect x="589.5" y="197.5" width="6" height="6" fill="none" stroke="#000" stroke-width="1" shape-rendering="crispEdges"/><rect x="155.5" y="259.5" width="6" height="6" fill="none" stroke="#000" stroke-width="1" shape-rendering="crispEdges"/><rect x="589.5" y="259.5" width="6" height="6" fill="none" stroke="#000" stroke-width="1" shape-rendering="crispEdges"/><rect x="155.5" y="320.5" width="6" height="6" fill="none" stroke="#000" stroke-width="1" shape-rendering="crispEdges"/><rect x="372.5" y="320.5" width="6" height="6" fill="none" stroke="#000" stroke-width="1" shape-rendering="crispEdges"/><rect x="589.5" y="320.5" width="6" height="6" fill="none" stroke="#000" stroke-width="1" shape-rendering="crispEdges"/><rect x="370" y="254" width="12" height="17" fill="#000"/><circle cx="206" cy="245" r="5" fill="none" stroke="#969696" stroke-width="3"/><circle cx="206" cy="245" r="6.3" fill="none" stroke="#60ff90" stroke-width="1"/><circle cx="206" cy="245" r="3.6" fill="none" stroke="#a000a0" stroke-width="1.2" stroke-dasharray="1.5 1.5"/><circle cx="293" cy="245" r="5" fill="none" stroke="#ffff30" stroke-width="3"/><circle cx="293" cy="245" r="3.4" fill="none" stroke="#ff4060" stroke-width="0.8" stroke-dasharray="1.5 1.5"/><circle cx="365" cy="246" r="5" fill="none" stroke="#ffff30" stroke-width="3"/><path d="M360.5 248A5 5 0 0 0 369.5 248" fill="none" stroke="#969696" stroke-width="3"/><circle cx="365" cy="246" r="6.3" fill="none" stroke="#60ff90" stroke-width="0.8" stroke-dasharray="6 4"/><circle cx="365" cy="246" r="3.6" fill="none" stroke="#a000a0" stroke-width="1.2" stroke-dasharray="1.5 1.5"/><circle cx="436" cy="246" r="5" fill="none" stroke="#ffff30" stroke-width="3"/><path d="M431.5 248A5 5 0 0 0 440.5 248" fill="none" stroke="#969696" stroke-width="3"/><circle cx="436" cy="246" r="6.3" fill="none" stroke="#60ff90" stroke-width="0.8" stroke-dasharray="6 4"/><circle cx="436" cy="246" r="3.6" fill="none" stroke="#a000a0" stroke-width="1.2" stroke-dasharray="1.5 1.5"/><circle cx="500" cy="247" r="5" fill="none" stroke="#ffff30" stroke-width="3"/><path d="M495.5 249A5 5 0 0 0 504.5 249" fill="none" stroke="#969696" stroke-width="3"/><circle cx="500" cy="247" r="6.3" fill="none" stroke="#60ff90" stroke-width="0.8" stroke-dasharray="6 4"/><circle cx="500" cy="247" r="3.6" fill="none" stroke="#a000a0" stroke-width="1.2" stroke-dasharray="1.5 1.5"/><circle cx="561.5" cy="247" r="5" fill="none" stroke="#ffff30" stroke-width="3"/><circle cx="561.5" cy="247" r="3.4" fill="none" stroke="#ff4060" stroke-width="0.8" stroke-dasharray="1.5 1.5"/><circle cx="206" cy="293" r="4.6" fill="#a8a8a8"/><path d="M201.4 294L210.6 294L208.5 297.5L203.5 297.5z" fill="#fff"/><path d="M204 295.5L208 295.5L206 298z" fill="#777"/><circle cx="293" cy="293" r="4.6" fill="#ffff40"/><path d="M288.4 294L297.6 294L295.5 297.5L290.5 297.5z" fill="#fff"/><path d="M291 295.5L295 295.5L293 298z" fill="#333"/><circle cx="365" cy="293" r="4.6" fill="#a8a8a8"/><path d="M360.4 294L369.6 294L367.5 297.5L362.5 297.5z" fill="#fff"/><path d="M363 295.5L367 295.5L365 298z" fill="#777"/><circle cx="436" cy="293.5" r="4.6" fill="#ffff40"/><path d="M431.4 294.5L440.6 294.5L438.5 298L433.5 298z" fill="#fff"/><path d="M434 296L438 296L436 298.5z" fill="#333"/><circle cx="499" cy="295" r="4.6" fill="#ffff40"/><path d="M494.4 296L503.6 296L501.5 299.5L496.5 299.5z" fill="#fff"/><path d="M497 297.5L501 297.5L499 300z" fill="#333"/><circle cx="561.5" cy="295" r="4.6" fill="#ffff40"/><path d="M556.9 296L566.1 296L564 299.5L559 299.5z" fill="#fff"/><path d="M559.5 297.5L563.5 297.5L561.5 300z" fill="#333"/><g stroke="#000" fill="none" stroke-linecap="round"><path d="M246.500 285.500L257 299M260.500 284.500L250 299" stroke-width="2"/><ellipse cx="248.300" cy="300.500" rx="2.600" ry="2" stroke-width="1.400" transform="rotate(-35 248.300 300.500)"/><ellipse cx="258.700" cy="300.500" rx="2.600" ry="2" stroke-width="1.400" transform="rotate(35 258.700 300.500)"/></g><g stroke="#000" fill="none" stroke-linecap="round"><path d="M585.500 243.500L596 256M599.500 242.500L589 256" stroke-width="2"/><circle cx="586.500" cy="258" r="2" stroke-width="1.300"/><circle cx="598.500" cy="258" r="2" stroke-width="1.300"/><path d="M584 255H601" stroke-width="1.200"/></g></svg><svg style="left:0;top:0" width="0" height="0"><defs><linearGradient id="gg" x1="0" y1="0" x2="0" y2="1"><stop offset="0" stop-color="#9a9a9a"/><stop offset="1" stop-color="#3c3c3c"/></linearGradient><linearGradient id="og" x1="0" y1="0" x2="1" y2="1"><stop offset="0" stop-color="#ffc080"/><stop offset="1" stop-color="#ff8000"/></linearGradient><linearGradient id="grn" x1="0" y1="0" x2="1" y2="0"><stop offset="0" stop-color="#006000"/><stop offset="0.600" stop-color="#60e060"/><stop offset="1" stop-color="#108010"/></linearGradient><linearGradient id="sq" x1="0" y1="0" x2="1" y2="1"><stop offset="0" stop-color="#80d8a0"/><stop offset="1" stop-color="#208848"/></linearGradient></defs></svg><div class="a" style="left:10px;top:87px;width:3px;height:23px;border-left:1px solid #fff;border-right:1px solid #a0a0a0;border-top:1px solid #fff;border-bottom:1px solid #a0a0a0;background:#f0f0f0"></div><div class="a" style="left:14px;top:87px;width:3px;height:23px;border-left:1px solid #fff;border-right:1px solid #a0a0a0;border-top:1px solid #fff;border-bottom:1px solid #a0a0a0;background:#f0f0f0"></div><div class="a" style="left:252px;top:85px;width:1px;height:26px;background:#a0a0a0"></div><div class="a" style="left:253px;top:85px;width:1px;height:26px;background:#fff"></div><div class="a" style="left:255px;top:87px;width:3px;height:23px;border-left:1px solid #fff;border-right:1px solid #a0a0a0;border-top:1px solid #fff;border-bottom:1px solid #a0a0a0;background:#f0f0f0"></div><div class="a" style="left:259px;top:87px;width:3px;height:23px;border-left:1px solid #fff;border-right:1px solid #a0a0a0;border-top:1px solid #fff;border-bottom:1px solid #a0a0a0;background:#f0f0f0"></div><div class="a" style="left:405px;top:85px;width:1px;height:26px;background:#a0a0a0"></div><div class="a" style="left:406px;top:85px;width:1px;height:26px;background:#fff"></div><div class="a" style="left:408px;top:87px;width:3px;height:23px;border-left:1px solid #fff;border-right:1px solid #a0a0a0;border-top:1px solid #fff;border-bottom:1px solid #a0a0a0;background:#f0f0f0"></div><div class="a" style="left:412px;top:87px;width:3px;height:23px;border-left:1px solid #fff;border-right:1px solid #a0a0a0;border-top:1px solid #fff;border-bottom:1px solid #a0a0a0;background:#f0f0f0"></div><div class="a" style="left:650px;top:85px;width:1px;height:26px;background:#a0a0a0"></div><div class="a" style="left:651px;top:85px;width:1px;height:26px;background:#fff"></div><div class="a" style="left:653px;top:87px;width:3px;height:23px;border-left:1px solid #fff;border-right:1px solid #a0a0a0;border-top:1px solid #fff;border-bottom:1px solid #a0a0a0;background:#f0f0f0"></div><div class="a" style="left:657px;top:87px;width:3px;height:23px;border-left:1px solid #fff;border-right:1px solid #a0a0a0;border-top:1px solid #fff;border-bottom:1px solid #a0a0a0;background:#f0f0f0"></div><div class="a" style="left:734px;top:85px;width:1px;height:26px;background:#a0a0a0"></div><div class="a" style="left:735px;top:85px;width:1px;height:26px;background:#fff"></div><div class="a" style="left:737px;top:87px;width:3px;height:23px;border-left:1px solid #fff;border-right:1px solid #a0a0a0;border-top:1px solid #fff;border-bottom:1px solid #a0a0a0;background:#f0f0f0"></div><div class="a" style="left:741px;top:87px;width:3px;height:23px;border-left:1px solid #fff;border-right:1px solid #a0a0a0;border-top:1px solid #fff;border-bottom:1px solid #a0a0a0;background:#f0f0f0"></div><div class="a" style="left:911px;top:85px;width:1px;height:26px;background:#a0a0a0"></div><div class="a" style="left:912px;top:85px;width:1px;height:26px;background:#fff"></div><div class="a" style="left:914px;top:87px;width:3px;height:23px;border-left:1px solid #fff;border-right:1px solid #a0a0a0;border-top:1px solid #fff;border-bottom:1px solid #a0a0a0;background:#f0f0f0"></div><div class="a" style="left:918px;top:87px;width:3px;height:23px;border-left:1px solid #fff;border-right:1px solid #a0a0a0;border-top:1px solid #fff;border-bottom:1px solid #a0a0a0;background:#f0f0f0"></div><div class="a" style="left:418px;top:89px;width:22px;height:19px;border:1px solid #6a6a6a;border-radius:3px;background:#f8f8f8;box-shadow:inset 1px 1px 0 #d0d0d0"></div><svg style="left:22px;top:90px" width="16" height="16" viewBox="0 0 16 16"><path d="M3.500 1.500h6.500l3 3v10h-9.500z" fill="#fff" stroke="#000"/><path d="M10 1.500v3h3" fill="none" stroke="#000"/></svg><svg style="left:45px;top:90px" width="16" height="16" viewBox="0 0 16 16"><path d="M1.500 13.500v-9h3.500l1 1.500h5v2" fill="#ffff00" stroke="#806000"/><path d="M1.500 13.500l3-6h10.500l-3.500 6z" fill="#ffd000" stroke="#806000"/><path d="M9 3.500c1-2 3-2 4 0m0 0l1-1.500m-1 1.500l-1.800-.3" fill="none" stroke="#000" stroke-width="0.900"/></svg><svg style="left:68px;top:90px" width="16" height="16" viewBox="0 0 16 16"><rect x="1.500" y="1.500" width="13" height="13" fill="#8c8c2c" stroke="#6a2020"/><rect x="4" y="2" width="8" height="6" fill="#fff"/><rect x="4.500" y="10" width="7" height="4.500" fill="#7a3030"/><rect x="8.500" y="11" width="2.500" height="3.500" fill="#fff"/></svg><svg style="left:91px;top:90px" width="16" height="16" viewBox="0 0 16 16"><rect x="1.500" y="1.500" width="12.500" height="13" fill="#103868" stroke="#0a2040"/><rect x="4" y="2" width="7.500" height="5.500" fill="#fff"/><rect x="4.500" y="10" width="7" height="4.500" fill="#fff"/><rect x="5" y="10.500" width="2.500" height="4" fill="#103868"/><path d="M7.800 2v3.500M5.500 4l2.300 2 2.300-2" stroke="#000" stroke-width="1.200" fill="none"/></svg><svg style="left:114px;top:90px" width="16" height="16" viewBox="0 0 16 16"><path d="M5.500 1.500h6.500l2.500 2.500v10h-9z" fill="#fff" stroke="#333"/><path d="M12 1.500v2.500h2.500" fill="none" stroke="#333" stroke-width="0.800"/><circle cx="4.500" cy="8" r="3.300" fill="#e8c828" stroke="#806010" stroke-width="0.700" stroke-dasharray="1.600 0.900"/><circle cx="4.500" cy="8" r="1.300" fill="#8020a0"/><path d="M8.500 8h3" stroke="#000" stroke-width="1.300"/><path d="M10 5.800l2.500 2.200-2.500 2.200z" fill="#000"/></svg><svg style="left:137px;top:90px" width="16" height="16" viewBox="0 0 16 16"><path d="M1.500 14v-8.500h3.500l1 1.500h6v2" fill="#ffff30" stroke="#a08000"/><path d="M1.500 14l2.500-5.500h10.500l-3 5.500z" fill="#ffe000" stroke="#a08000"/><text x="8" y="8.500" font-family="Liberation Serif,serif" font-weight="bold" font-size="11" fill="#d00000">T</text><path d="M3.500 1v4M1.500 3h4" stroke="#000" stroke-width="1"/></svg><svg style="left:160px;top:90px" width="16" height="16" viewBox="0 0 16 16"><rect x="4.500" y="1.500" width="7.500" height="8" fill="#fff" stroke="#000"/><path d="M6.500 4h3.500M6.500 6h3.500" stroke="#000" stroke-width="1"/><path d="M2.800 9.500h10.400a1.800 1.800 0 0 1 0 3.600h-10.400a1.800 1.800 0 0 1 0-3.600z" fill="#fff" stroke="#000" stroke-width="1.100"/><path d="M3 13h10" stroke="#000" stroke-width="1.400"/></svg><svg style="left:183px;top:90px" width="16" height="16" viewBox="0 0 16 16"><rect x="4.500" y="1.500" width="7.500" height="8" fill="#fff" stroke="#000"/><circle cx="7.500" cy="4.500" r="1.500" fill="none" stroke="#000" stroke-width="0.900"/><path d="M8.500 5.500l2 2" stroke="#000" stroke-width="1.100"/><path d="M2.800 9.500h10.400a1.800 1.800 0 0 1 0 3.600h-10.400a1.800 1.800 0 0 1 0-3.600z" fill="#fff" stroke="#000" stroke-width="1.100"/><path d="M3 13h10" stroke="#000" stroke-width="1.400"/></svg><svg style="left:206px;top:90px" width="16" height="16" viewBox="0 0 16 16"><rect x="0" y="0" width="16" height="15" fill="#ffc82e"/><path d="M8 13.500v-9.500M8 4c3.500-1.500 5.500 1 4.500 3.500s-4 2-4.500 1M8 4.500c-3-1.500-4.500 1-3 2.500s3 .5 3-1" fill="none" stroke="#1a3a8a" stroke-width="1.600"/><circle cx="8" cy="2.500" r="1.200" fill="#1a3a8a"/></svg><svg style="left:229px;top:90px" width="16" height="16" viewBox="0 0 16 16"><path d="M4.500 5c0-2.500 1.500-3.500 3.500-3.500s3.500 1 3.500 3-2 2.500-2.500 4.500h-2.500c0-2.500 2-3 2-4.300s-1.800-1.300-1.800.3z" fill="#ffff00" stroke="#000" stroke-width="0.900"/><rect x="6.500" y="10.500" width="2.500" height="2.500" fill="#ffff00" stroke="#000" stroke-width="0.900"/></svg><svg style="left:267px;top:90px" width="16" height="16" viewBox="0 0 16 16"><path d="M3 5.500c5-3 9-1 9.500 2.500s-1.500 4.500-3.500 5" fill="none" stroke="#800080" stroke-width="1.800"/><path d="M1 5.500l5-3.500-.5 5.500z" fill="#800080"/></svg><svg style="left:290px;top:90px" width="16" height="16" viewBox="0 0 16 16"><path d="M13 5.500c-5-3-9-1-9.500 2.500s1.500 4.500 3.500 5" fill="none" stroke="#800080" stroke-width="1.800"/><path d="M15 5.500l-5-3.500.5 5.500z" fill="#800080"/></svg><svg style="left:313px;top:90px" width="16" height="16" viewBox="0 0 16 16"><path d="M2 1.500l8.500 9M14 1.500l-8.500 9" stroke="#000" stroke-width="2" fill="none"/><path d="M2 1.500l3 5M14 1.500l-3 5" stroke="#000" stroke-width="2.600"/><circle cx="4.500" cy="12" r="2" fill="none" stroke="#2020e0" stroke-width="1.200"/><circle cx="11.500" cy="12" r="2" fill="none" stroke="#2020e0" stroke-width="1.200"/></svg><svg style="left:336px;top:90px" width="16" height="16" viewBox="0 0 16 16"><path d="M1.500 1.500h5.500l2 2v7h-7.500z" fill="#fff" stroke="#000"/><path d="M3 4.500h3.500M3 6.500h4M3 8.500h4" stroke="#000" stroke-width="0.700"/><path d="M6.500 4.500h5.500l2.500 2.500v8h-8z" fill="#fff" stroke="#000"/><path d="M8.500 8.500h4M8.500 10.500h4.500M8.500 12.500h4.500" stroke="#000" stroke-width="0.700"/></svg><svg style="left:359px;top:90px" width="16" height="16" viewBox="0 0 16 16"><rect x="2.500" y="2.500" width="10" height="11.500" fill="#8c8c2c" stroke="#000"/><rect x="5.500" y="1" width="4" height="2.500" fill="#ffe000" stroke="#000" stroke-width="0.800"/><path d="M7.500 6.500h4.500l2 2v6h-6.500z" fill="#fff" stroke="#000"/><path d="M9 9.500h3M9 11.500h3.500M9 13.200h3.500" stroke="#000" stroke-width="0.700"/></svg><svg style="left:382px;top:90px" width="16" height="16" viewBox="0 0 16 16"><path d="M3 2.500l10 10M12.500 2l-9.500 11" stroke="#e01010" stroke-width="2.600" fill="none"/></svg><svg style="left:421px;top:90px" width="16" height="16" viewBox="0 0 16 16"><path d="M5 1.500l7.500 8.500-3.500-.3 2 4-1.800.8-2-4-2.200 2.500z" fill="#e040c0" stroke="#700070" stroke-width="0.800"/><path d="M5.500 3v9" stroke="#ff90e0" stroke-width="0.800"/></svg><svg style="left:443px;top:90px" width="16" height="16" viewBox="0 0 16 16"><path d="M2 8c-2-4 2-6.500 6.500-6.500s7.500 2.500 5.500 6" fill="none" stroke="#a050a0" stroke-width="1.300"/><path d="M3 4l5.500 6.500-2.300-.2 1.200 3.200-1.400.6-1.300-3.200-1.700 1.800z" fill="#e040c0" stroke="#700070" stroke-width="0.600"/><path d="M8 4l5.500 6.500-2.300-.2 1.200 3.200-1.400.6-1.300-3.200-1.700 1.800z" fill="#e040c0" stroke="#700070" stroke-width="0.600"/></svg><svg style="left:466px;top:90px" width="16" height="16" viewBox="0 0 16 16"><path d="M1 1h14v7.500h-3c0-3-8-3-8 0h-3z" fill="#900060"/><path d="M7.500 7.500l5.500 4.500-2.500.5-1 2.500z" fill="#000"/></svg><svg style="left:489px;top:90px" width="16" height="16" viewBox="0 0 16 16"><path d="M1.500 14c0-8 3-12.500 6.500-12.500s6.500 4.500 6.500 12.500" fill="none" stroke="#8040a0" stroke-width="1.100"/><path d="M8 2.500l4 10.500-2.500-1-1 2.500-1.500-3.500-2 1.500z" fill="#d030b0" stroke="#700070" stroke-width="0.500"/><circle cx="7" cy="2.500" r="1.900" fill="#ff1010"/></svg><svg style="left:512px;top:90px" width="16" height="16" viewBox="0 0 16 16"><path d="M1.500 1.500h12l-12 11z" fill="none" stroke="#8040a0" stroke-width="1.100"/><path d="M9 2.500l5 10-2.700-1-1.300 3-1.500-3.500-2 1.500z" fill="#d030b0" stroke="#700070" stroke-width="0.500"/><path d="M1.500 2.500l3-1.500v3zM10 4.500l-3-2 .5 3z" fill="#000"/><path d="M3 2.500l5 1.500" stroke="#000" stroke-width="1.200"/></svg><svg style="left:535px;top:90px" width="16" height="16" viewBox="0 0 16 16"><path d="M1.500 1.500h12l-12 11z" fill="none" stroke="#8040a0" stroke-width="1.100"/><path d="M9 2.500l5 10-2.700-1-1.300 3-1.500-3.500-2 1.500z" fill="#d030b0" stroke="#700070" stroke-width="0.500"/><circle cx="3" cy="3.500" r="1.900" fill="#ffee00"/><circle cx="10" cy="4.500" r="1.900" fill="#ffee00"/><path d="M4 3.500l4.500 1" stroke="#000" stroke-width="1.200" stroke-dasharray="1.500 1"/></svg><svg style="left:558px;top:90px" width="16" height="16" viewBox="0 0 16 16"><rect x="1" y="0" width="14" height="15" fill="#f2d6c2"/><path d="M2 1l4 9 7-1M3.500 1l3.500 7.500" stroke="#b020a0" stroke-width="1.500" fill="none"/><path d="M3 13l10-2.500" stroke="#f8f0a0" stroke-width="1.500"/><path d="M2 12.500l4-2.500" stroke="#b020a0" stroke-width="1.200"/></svg><svg style="left:581px;top:90px" width="16" height="16" viewBox="0 0 16 16"><rect x="1" y="0" width="14" height="15" fill="#f2d6c2"/><path d="M3 1l3.500 8.500 7 .5M4.500 1l3 7" stroke="#b020a0" stroke-width="1.500" fill="none"/><path d="M2 14l5-4.500 5 2.500" stroke="#b020a0" stroke-width="1.200" fill="none"/><path d="M3 13.500l4-3" stroke="#fff" stroke-width="0.800"/></svg><svg style="left:604px;top:90px" width="16" height="16" viewBox="0 0 16 16"><path d="M1 14c0-7 3-12 7-12s7 4 7 10" fill="none" stroke="#8040a0" stroke-width="1.100"/><path d="M5.500 5l7.500 8M13 4.500l-7.500 9" stroke="#ff1010" stroke-width="2.800" fill="none"/></svg><svg style="left:627px;top:90px" width="16" height="16" viewBox="0 0 16 16"><rect x="4" y="0.500" width="8" height="14.500" fill="#901090" stroke="#600060" stroke-width="0.600"/><circle cx="8" cy="3.500" r="1.900" fill="#ff2020"/><circle cx="8" cy="7.700" r="1.900" fill="#ffee00"/><circle cx="8" cy="12" r="1.900" fill="#20c020"/></svg><svg style="left:665px;top:90px" width="16" height="16" viewBox="0 0 16 16"><path d="M1 9.500l10-8" stroke="#8040a0" stroke-width="1.200"/><path d="M7 3l7 7.500-3-.2 1.500 3.700-1.700.7-1.600-3.700-2.200 2z" fill="#d030b0" stroke="#700070" stroke-width="0.500"/><circle cx="1.500" cy="9.500" r="1" fill="#3030c0"/><circle cx="10.500" cy="2" r="1" fill="#3030c0"/><path d="M3 12l5-3" stroke="#b040b0" stroke-width="1"/></svg><svg style="left:688px;top:90px" width="16" height="16" viewBox="0 0 16 16"><ellipse cx="8" cy="5.500" rx="7" ry="4.500" fill="none" stroke="#9040a0" stroke-width="1.400"/><path d="M3 9c-1 3 1 4.500 3 3.500" fill="none" stroke="#9040a0" stroke-width="1.200"/><path d="M8 3.500l5.500 7-2.500-.2 1.200 3.400-1.500.6-1.300-3.400-1.900 1.800z" fill="#d030b0" stroke="#700070" stroke-width="0.500"/><path d="M2 9l6-6" stroke="#9040a0" stroke-width="1"/></svg><svg style="left:711px;top:90px" width="16" height="16" viewBox="0 0 16 16"><path d="M0.500 1.500h15M0.500 14h15" stroke="#9020a0" stroke-width="1.300"/><path d="M1.500 14l3-12.500 3 12.500 3-12.500 3 12.500" fill="none" stroke="#9020a0" stroke-width="1.300"/><path d="M4.500 4l7 8M11.500 3.500l-7 9" stroke="#ff1010" stroke-width="2.600"/><circle cx="1.500" cy="14" r="1" fill="#3030c0"/><circle cx="13.500" cy="14" r="1" fill="#3030c0"/></svg><svg style="left:749px;top:90px" width="16" height="16" viewBox="0 0 16 16"><circle cx="5.500" cy="5.500" r="4.600" fill="#fbfbfb" stroke="#4a8a5a" stroke-width="1.300"/><circle cx="5.500" cy="5.500" r="3.300" fill="none" stroke="#d0d0d0" stroke-width="0.800"/><path d="M9 9l5.500 5.500" stroke="#3a9a5a" stroke-width="2.400" stroke-linecap="round"/><path d="M9.500 9.500l5 5" stroke="#90d0a0" stroke-width="0.800"/></svg><svg style="left:772px;top:90px" width="16" height="16" viewBox="0 0 16 16"><circle cx="5.500" cy="5.500" r="4.600" fill="#fbfbfb" stroke="#4a8a5a" stroke-width="1.300"/><circle cx="5.500" cy="5.500" r="3.300" fill="none" stroke="#d0d0d0" stroke-width="0.800"/><path d="M9 9l5.500 5.500" stroke="#3a9a5a" stroke-width="2.400" stroke-linecap="round"/><path d="M9.500 9.500l5 5" stroke="#90d0a0" stroke-width="0.800"/><path d="M3 5.500h5M5.500 3v5" stroke="#000" stroke-width="1.300"/></svg><svg style="left:795px;top:90px" width="16" height="16" viewBox="0 0 16 16"><circle cx="5.500" cy="5.500" r="4.600" fill="#fbfbfb" stroke="#4a8a5a" stroke-width="1.300"/><circle cx="5.500" cy="5.500" r="3.300" fill="none" stroke="#d0d0d0" stroke-width="0.800"/><path d="M9 9l5.500 5.500" stroke="#3a9a5a" stroke-width="2.400" stroke-linecap="round"/><path d="M9.500 9.500l5 5" stroke="#90d0a0" stroke-width="0.800"/><path d="M3 5.500h5" stroke="#000" stroke-width="1.300"/></svg><svg style="left:818px;top:90px" width="16" height="16" viewBox="0 0 16 16"><rect x="1.500" y="1.500" width="13" height="12" rx="2.500" fill="#404840"/><rect x="1.200" y="1" width="13.600" height="12" rx="2.500" fill="#f6f6f6" stroke="#2f7f3f" stroke-width="1.300"/><rect x="2.700" y="2.500" width="10.600" height="9" rx="1" fill="none" stroke="#b0b0b0" stroke-width="0.600"/><text x="3.300" y="11" font-family="Liberation Sans,sans-serif" font-weight="bold" font-size="7.500" fill="#000" letter-spacing="-0.300">1:1</text></svg><svg style="left:841px;top:90px" width="16" height="16" viewBox="0 0 16 16"><rect x="1.500" y="1.500" width="13" height="12" rx="2.500" fill="#404840"/><rect x="1.200" y="1" width="13.600" height="12" rx="2.500" fill="#f6f6f6" stroke="#2f7f3f" stroke-width="1.300"/><rect x="2.700" y="2.500" width="10.600" height="9" rx="1" fill="none" stroke="#b0b0b0" stroke-width="0.600"/><path d="M8 3v3.500M8 9v3.500M3.500 7.800h3M9.500 7.800h3" stroke="#000" stroke-width="1.600"/><path d="M8 6.500l-1.800-2h3.600zM8 9l-1.800 2h3.600zM6.500 7.800l-2-1.800v3.600zM9.500 7.800l2-1.800v3.600z" fill="#000"/></svg><svg style="left:864px;top:90px" width="16" height="16" viewBox="0 0 16 16"><rect x="1" y="1.500" width="14" height="12.500" rx="2.500" fill="#3a9a3a" stroke="#2a7a2a" stroke-width="1.600"/><rect x="3" y="4" width="10" height="7.500" fill="#fff"/><path d="M4 4v7.500M6.500 4v7.500M9 4v7.500M11.500 4v7.500" stroke="#c030c0" stroke-width="1.500"/></svg><svg style="left:887px;top:90px" width="16" height="16" viewBox="0 0 16 16"><path d="M1 13l10-9.500h4.500l-10 9.500z" fill="#f4fff4" stroke="#3a9a3a" stroke-width="1"/><path d="M4.500 10l1.500 1.500M6.500 8l1.500 1.500M8.500 6l1.500 1.500M10.500 4.500l1.500 1.500" stroke="#3a9a3a" stroke-width="0.800"/></svg><svg style="left:924px;top:90px" width="16" height="16" viewBox="0 0 16 16"><path d="M1.500 1.500l9 9.500M11.500 1.500l-9 9.500" stroke="#000" stroke-width="1.800"/><circle cx="3" cy="11.500" r="1.600" fill="none" stroke="#000" stroke-width="1.100"/><circle cx="10" cy="11.500" r="1.600" fill="none" stroke="#000" stroke-width="1.100"/><path d="M6.500 0v14" stroke="#a040a0" stroke-width="0.800" stroke-dasharray="1.500 1"/><path d="M11.500 12.500h4.500M13.700 10.300v4.500" stroke="#000" stroke-width="1.300"/></svg><div class="a" style="left:948px;top:92px;width:4px;height:11px;background:linear-gradient(100deg,#2060d0 40%,#80c0f0 60%,transparent 70%)"></div><div class="a" style="left:10px;top:114px;width:3px;height:23px;border-left:1px solid #fff;border-right:1px solid #a0a0a0;border-top:1px solid #fff;border-bottom:1px solid #a0a0a0;background:#f0f0f0"></div><div class="a" style="left:14px;top:114px;width:3px;height:23px;border-left:1px solid #fff;border-right:1px solid #a0a0a0;border-top:1px solid #fff;border-bottom:1px solid #a0a0a0;background:#f0f0f0"></div><div class="a" style="left:275px;top:112px;width:1px;height:26px;background:#a0a0a0"></div><div class="a" style="left:276px;top:112px;width:1px;height:26px;background:#fff"></div><div class="a" style="left:279px;top:114px;width:3px;height:23px;border-left:1px solid #fff;border-right:1px solid #a0a0a0;border-top:1px solid #fff;border-bottom:1px solid #a0a0a0;background:#f0f0f0"></div><div class="a" style="left:283px;top:114px;width:3px;height:23px;border-left:1px solid #fff;border-right:1px solid #a0a0a0;border-top:1px solid #fff;border-bottom:1px solid #a0a0a0;background:#f0f0f0"></div><div class="a" style="left:498px;top:112px;width:1px;height:26px;background:#a0a0a0"></div><div class="a" style="left:499px;top:112px;width:1px;height:26px;background:#fff"></div><div class="a" style="left:500px;top:114px;width:3px;height:23px;border-left:1px solid #fff;border-right:1px solid #a0a0a0;border-top:1px solid #fff;border-bottom:1px solid #a0a0a0;background:#f0f0f0"></div><div class="a" style="left:504px;top:114px;width:3px;height:23px;border-left:1px solid #fff;border-right:1px solid #a0a0a0;border-top:1px solid #fff;border-bottom:1px solid #a0a0a0;background:#f0f0f0"></div><div class="a" style="left:743px;top:112px;width:1px;height:26px;background:#a0a0a0"></div><div class="a" style="left:744px;top:112px;width:1px;height:26px;background:#fff"></div><svg style="left:22px;top:117px" width="16" height="16" viewBox="0 0 16 16"><rect x="1.500" y="2.500" width="5.500" height="9.500" fill="url(#gg)" stroke="#303030" stroke-width="0.700"/><rect x="9.500" y="2.500" width="5.500" height="9.500" fill="url(#og)" stroke="#a05000" stroke-width="0.700"/></svg><svg style="left:45px;top:117px" width="16" height="16" viewBox="0 0 16 16"><rect x="1.500" y="1.500" width="6" height="9" fill="url(#gg)" stroke="#303030" stroke-width="0.700"/><path d="M8.500 5h6l-2.500 9.500h-6z" fill="url(#og)" stroke="#a05000" stroke-width="0.700"/><path d="M11.500 1v3M10.300 2.200l1.200-1.200 1.200 1.200" stroke="#000" stroke-width="0.800" fill="none"/></svg><svg style="left:68px;top:117px" width="16" height="16" viewBox="0 0 16 16"><path d="M5 3c4-3 9.500 0 9.500 5s-5 7.500-8.500 5.500" fill="none" stroke="#000" stroke-width="1.500"/><path d="M2.500 3.500l4-2-.5 4z" fill="#000"/><path d="M7 8h5M9.500 5.500v5" stroke="#000" stroke-width="1.200"/><path d="M3 7v0M3.500 10v0M5 12.500v0" stroke="#000" stroke-width="1.600" stroke-linecap="round"/></svg><svg style="left:91px;top:117px" width="16" height="16" viewBox="0 0 16 16"><rect x="1.500" y="3.500" width="5" height="9" fill="url(#gg)" stroke="#303030" stroke-width="0.700"/><rect x="9.500" y="3.500" width="5" height="8" fill="url(#og)" stroke="#a05000" stroke-width="0.700"/><path d="M7.500 12.500l2-9" stroke="#303030" stroke-width="0.800"/></svg><svg style="left:114px;top:117px" width="16" height="16" viewBox="0 0 16 16"><rect x="4.500" y="4.500" width="10" height="10" fill="url(#og)" stroke="#a05000" stroke-width="0.700"/><rect x="1.500" y="1.500" width="7.500" height="7.500" fill="url(#gg)" stroke="#303030" stroke-width="0.700"/></svg><svg style="left:137px;top:117px" width="16" height="16" viewBox="0 0 16 16"><rect x="5.500" y="5.500" width="9" height="9" fill="url(#og)" stroke="#a05000" stroke-width="0.700"/><rect x="1.500" y="1.500" width="6" height="5.500" fill="url(#gg)" stroke="#303030" stroke-width="0.700"/><path d="M2 10.500l3-1.500v3z" fill="#000"/><path d="M2.500 8v2" stroke="#000" stroke-width="0.800"/></svg><svg style="left:160px;top:117px" width="16" height="16" viewBox="0 0 16 16"><path d="M4.500 4c3.500-3.500 10-1 10 4s-5 7-9 5-4-5-3-7" fill="none" stroke="#000" stroke-width="1.500"/><path d="M2.500 1.500l.5 4.500 4-1z" fill="#000"/></svg><svg style="left:183px;top:117px" width="16" height="16" viewBox="0 0 16 16"><path d="M3 1h10l-5 5.500z" fill="url(#og)" stroke="#a05000" stroke-width="0.700"/><path d="M3 14.500h10l-5-5.500z" fill="url(#gg)" stroke="#303030" stroke-width="0.700"/><path d="M1.500 8h13" stroke="#000" stroke-width="1.100" stroke-dasharray="2.500 1"/></svg><svg style="left:206px;top:117px" width="16" height="16" viewBox="0 0 16 16"><rect x="4.500" y="4.500" width="7" height="7" fill="url(#og)" stroke="#a05000" stroke-width="0.700"/><path d="M8 0l2.500 3h-5zM8 16l2.500-3h-5zM0 8l3-2.500v5zM16 8l-3-2.500v5z" fill="#000"/></svg><svg style="left:229px;top:117px" width="16" height="16" viewBox="0 0 16 16"><path d="M1 2.500h14" stroke="#6a1010" stroke-width="1.200"/><path d="M1 12.500l3-7 3 7zM9 12.500l3-7 3 7z" fill="url(#og)" stroke="#a05000" stroke-width="0.700"/></svg><svg style="left:252px;top:117px" width="16" height="16" viewBox="0 0 16 16"><path d="M1.500 3.500h13v7l-1 .0c-1-4-10-4-11 0l-1 0z" fill="url(#og)" stroke="#a05000" stroke-width="0.700"/></svg><svg style="left:291px;top:117px" width="16" height="16" viewBox="0 0 16 16"><circle cx="7" cy="7" r="5" fill="#fff" stroke="#008000" stroke-width="3.200"/><path d="M10 13.500h5M12.500 11v5" stroke="#000" stroke-width="1.400"/></svg><svg style="left:314px;top:117px" width="16" height="16" viewBox="0 0 16 16"><circle cx="7" cy="7" r="5" fill="#000" stroke="#008000" stroke-width="3.200"/><path d="M11 14h4.500" stroke="#000" stroke-width="1.400"/></svg><svg style="left:337px;top:117px" width="16" height="16" viewBox="0 0 16 16"><path d="M1 3h5.500M8 3.500v9.500M9.500 13h5.500" stroke="#000" stroke-width="1.200" stroke-dasharray="3 1.200"/><path d="M8 1l1.500 2-1.500 2-1.500-2zM8 11l1.500 2-1.500 2-1.500-2z" fill="#008000"/></svg><svg style="left:360px;top:117px" width="16" height="16" viewBox="0 0 16 16"><circle cx="5.500" cy="5.500" r="4.500" fill="#008000"/><circle cx="10" cy="10.500" r="4.500" fill="#008000"/><path d="M3 9l5 5M8 2l5 5" stroke="#008000" stroke-width="2"/></svg><svg style="left:383px;top:117px" width="16" height="16" viewBox="0 0 16 16"><circle cx="5.500" cy="5.500" r="4.500" fill="#008000"/><circle cx="10.500" cy="10.500" r="4.500" fill="#008000"/><ellipse cx="8" cy="8" rx="2.300" ry="1" fill="#fff" transform="rotate(-45 8 8)"/></svg><svg style="left:406px;top:117px" width="16" height="16" viewBox="0 0 16 16"><circle cx="5.500" cy="5.500" r="4.500" fill="#fff" stroke="#404040" stroke-width="0.800" stroke-dasharray="1.500 1.200"/><circle cx="10.500" cy="10.500" r="4.500" fill="#fff" stroke="#404040" stroke-width="0.800" stroke-dasharray="1.500 1.200"/><ellipse cx="8" cy="8" rx="3.300" ry="1.500" fill="#008000" transform="rotate(-45 8 8)"/></svg><svg style="left:429px;top:117px" width="16" height="16" viewBox="0 0 16 16"><circle cx="5.500" cy="5.500" r="4.500" fill="#008000"/><circle cx="10.500" cy="10.500" r="4.500" fill="#008000" stroke="#006000" stroke-width="0.500"/></svg><svg style="left:452px;top:117px" width="16" height="16" viewBox="0 0 16 16"><path d="M2 2l4.500 2.500 2 6.500 5 1.500" fill="none" stroke="#008000" stroke-width="1.400"/><circle cx="2.500" cy="2" r="1.600" fill="#10a010"/><circle cx="6.500" cy="4.500" r="1.600" fill="#10a010"/><circle cx="8.500" cy="11" r="1.600" fill="#10a010"/><circle cx="13.500" cy="12.500" r="1.800" fill="#10c010"/></svg><svg style="left:475px;top:117px" width="16" height="16" viewBox="0 0 16 16"><rect x="1.500" y="2.500" width="9" height="11.500" fill="url(#grn)" stroke="#707070" stroke-width="0.800"/></svg><svg style="left:513px;top:117px" width="16" height="16" viewBox="0 0 16 16"><text x="0.300" y="7.800" font-family="Liberation Sans,sans-serif" font-weight="bold" font-size="13" fill="#2a2a90">x</text><text x="7.700" y="14" font-family="Liberation Sans,sans-serif" font-weight="bold" font-size="13" fill="#2a2a90">x</text></svg><svg style="left:536px;top:117px" width="16" height="16" viewBox="0 0 16 16"><rect x="0.500" y="0.500" width="15" height="14" fill="#f0f0f8" stroke="#2a2a90" stroke-width="1"/><path d="M2.500 2.500l5.500 5-5.500 5M8 2.500l-5.500 5 5.500 5M8 2.500l5.500 5-5.500 5M13.500 2.500l-5.500 5 5.500 5" fill="none" stroke="#2a2a90" stroke-width="1.700"/></svg><svg style="left:559px;top:117px" width="16" height="16" viewBox="0 0 16 16"><path d="M8 1.500v12.500M1.500 7.700h13M3.300 3l9.400 9.400M12.700 3l-9.400 9.400" stroke="#2a2a90" stroke-width="1.300"/></svg><svg style="left:582px;top:117px" width="16" height="16" viewBox="0 0 16 16"><circle cx="8" cy="7.700" r="6.200" fill="#f4f6ff" stroke="#2020a8" stroke-width="1.900"/><circle cx="8" cy="7.700" r="4.600" fill="none" stroke="#90a0e0" stroke-width="0.800"/><path d="M5.500 4.500l6.500 4M5.500 4.500l3.500 7.500M5.500 4.500l-1.500 6" stroke="#3030b0" stroke-width="0.700"/></svg><svg style="left:605px;top:117px" width="16" height="16" viewBox="0 0 16 16"><rect x="2" y="2" width="12" height="12" rx="3" fill="#eef2f2" stroke="#5090a8" stroke-width="1.500" stroke-dasharray="1.200 0.700"/><path d="M3 12.500c1 1.500 9 1.500 10 0" fill="none" stroke="#304858" stroke-width="1.300" stroke-dasharray="1.200 0.700"/><path d="M4 2.200h8" stroke="#90d0e0" stroke-width="1.300" stroke-dasharray="1.200 0.700"/></svg><svg style="left:628px;top:117px" width="16" height="16" viewBox="0 0 16 16"><rect x="1" y="1.500" width="14" height="13" rx="3" fill="#d8e8f0" stroke="#306080" stroke-width="1.300"/><rect x="2.500" y="3" width="11" height="10" rx="2" fill="#fff" stroke="#80c0d0" stroke-width="0.700" stroke-dasharray="1 1"/><path d="M5 4.500l5.500 5.500M11 4.500l-5.500 5.500" stroke="#000" stroke-width="1.300"/><circle cx="5.500" cy="11" r="1.200" fill="none" stroke="#000" stroke-width="0.800"/><circle cx="10.500" cy="11" r="1.200" fill="none" stroke="#000" stroke-width="0.800"/></svg><svg style="left:651px;top:117px" width="16" height="16" viewBox="0 0 16 16"><text x="0.500" y="13.800" font-family="Liberation Sans,sans-serif" font-size="15" fill="#2535a0" stroke="#2535a0" stroke-width="0.400" textLength="13.500" lengthAdjust="spacingAndGlyphs">W</text><path d="M1 1.800h3M6.500 1.800h2.500M11.500 1.800h3M3 13.800h2.500M9.500 13.800h2.500" stroke="#40a0e0" stroke-width="0.900"/><path d="M0.500 6c2-1 3 2 5 1s3-2 5-1 2 1 3.500 2" fill="none" stroke="#101010" stroke-width="0.800"/></svg><svg style="left:674px;top:117px" width="16" height="16" viewBox="0 0 16 16"><text x="2" y="13.800" font-family="Liberation Sans,sans-serif" font-size="15" fill="#2535a0" stroke="#2535a0" stroke-width="0.400" textLength="12.500" lengthAdjust="spacingAndGlyphs">W</text><path d="M1 1.800h3M6.500 1.800h2.500M11.500 1.800h3M3 13.800h2.500M9.500 13.800h2.500" stroke="#40a0e0" stroke-width="0.900"/><circle cx="8.200" cy="8.500" r="3.300" fill="#102a48"/><path d="M8.200 5.500v6M5.200 8.500h6" stroke="#3088b0" stroke-width="0.700"/></svg><svg style="left:697px;top:117px" width="16" height="16" viewBox="0 0 16 16"><path d="M7.500 4.500v4.500" stroke="#3060c0" stroke-width="1.800"/><circle cx="7.500" cy="2.800" r="2" fill="#a8d8f8" stroke="#3060c0" stroke-width="0.900"/><path d="M3.500 8.500h8c1.500 0 3 1.500 3 3v1c0 1-0.500 1.500-1.500 1.500h-11c-1 0-1.500-0.500-1.500-1.500v-1c0-1.500 1.500-3 3-3z" fill="#78a8e0" stroke="#2848b0" stroke-width="0.900"/><path d="M1 11.500h13" stroke="#d0e8ff" stroke-width="1"/><path d="M7.500 9v5" stroke="#3060c0" stroke-width="0.800"/></svg><svg style="left:720px;top:117px" width="16" height="16" viewBox="0 0 16 16"><path d="M1.500 2l5 3.500M14 2l-5 3.500M7.800 9v5.500" stroke="#203080" stroke-width="1"/><circle cx="7.800" cy="6.300" r="3" fill="#a0d0f0" stroke="#3060b0" stroke-width="1"/><circle cx="7.800" cy="6.300" r="1.200" fill="#d8f0ff"/><circle cx="1.500" cy="2" r="0.900" fill="#203080"/><circle cx="14" cy="2" r="0.900" fill="#203080"/><circle cx="7.800" cy="14.500" r="0.700" fill="#203080"/></svg><div class="a" style="left:133px;top:141px;width:1px;height:20px;background:#a0a0a0"></div><div class="a" style="left:134px;top:141px;width:1px;height:20px;background:#fff"></div><div class="a" style="left:324px;top:141px;width:1px;height:20px;background:#a0a0a0"></div><div class="a" style="left:325px;top:141px;width:1px;height:20px;background:#fff"></div><div class="a" style="left:377px;top:141px;width:1px;height:20px;background:#a0a0a0"></div><div class="a" style="left:378px;top:141px;width:1px;height:20px;background:#fff"></div><div class="a" style="left:545px;top:141px;width:1px;height:20px;background:#a0a0a0"></div><div class="a" style="left:546px;top:141px;width:1px;height:20px;background:#fff"></div><div class="a" style="left:574px;top:141px;width:1px;height:20px;background:#a0a0a0"></div><div class="a" style="left:575px;top:141px;width:1px;height:20px;background:#fff"></div><div class="a" style="left:137px;top:142px;width:22px;height:18px;border:1px solid #6a6a6a;border-radius:3.500px;background:#fafafa;box-shadow:inset 1px 1px 0 #c8c8c8"></div><div class="a" style="left:183px;top:142px;width:22px;height:18px;border:1px solid #6a6a6a;border-radius:3.500px;background:#fafafa;box-shadow:inset 1px 1px 0 #c8c8c8"></div><div class="a" style="left:206px;top:142px;width:22px;height:18px;border:1px solid #6a6a6a;border-radius:3.500px;background:#fafafa;box-shadow:inset 1px 1px 0 #c8c8c8"></div><div class="a" style="left:229px;top:142px;width:22px;height:18px;border:1px solid #6a6a6a;border-radius:3.500px;background:#fafafa;box-shadow:inset 1px 1px 0 #c8c8c8"></div><div class="a" style="left:252px;top:142px;width:22px;height:18px;border:1px solid #6a6a6a;border-radius:3.500px;background:#fafafa;box-shadow:inset 1px 1px 0 #c8c8c8"></div><div class="a" style="left:298px;top:142px;width:22px;height:18px;border:1px solid #6a6a6a;border-radius:3.500px;background:#fafafa;box-shadow:inset 1px 1px 0 #c8c8c8"></div><div class="a" style="left:351px;top:142px;width:22px;height:18px;border:1px solid #6a6a6a;border-radius:3.500px;background:#fafafa;box-shadow:inset 1px 1px 0 #c8c8c8"></div><svg style="left:40px;top:143px" width="16" height="16" viewBox="0 0 16 16"><circle cx="8" cy="8" r="6" fill="#585858" stroke="#303030" stroke-width="0.800"/><path d="M8 3.500l2 2-2 2-2-2zM8 8.500l2 2-2 2-2-2zM5.500 6l2 2-2 2-2-2zM10.500 6l2 2-2 2-2-2z" fill="#b8e0c0"/></svg><svg style="left:62px;top:143px" width="16" height="16" viewBox="0 0 16 16"><rect x="1" y="1.500" width="7" height="6.500" fill="url(#sq)" stroke="#308050" stroke-width="0.600"/><rect x="9.500" y="6" width="7" height="7.500" rx="1" fill="#e8e8e8" stroke="#606060" stroke-width="1"/><path d="M11 13.500l4-2.500v3.500z" fill="#000"/><path d="M10.500 10.500l3 2" stroke="#000" stroke-width="1"/></svg><svg style="left:85px;top:143px" width="16" height="16" viewBox="0 0 16 16"><rect x="1.500" y="1.500" width="7" height="7" fill="#fafafa" stroke="#a0a0a0" stroke-width="0.800"/><rect x="9" y="5.500" width="7" height="7.500" fill="url(#sq)" stroke="#308050" stroke-width="0.600"/><path d="M10.500 13.500l3.500-2v3z" fill="#103010"/></svg><svg style="left:108px;top:143px" width="16" height="16" viewBox="0 0 16 16"><rect x="2" y="1.500" width="7" height="6.500" fill="url(#sq)" stroke="#308050" stroke-width="0.600"/><rect x="9" y="7" width="7" height="7" fill="url(#sq)" stroke="#308050" stroke-width="0.600"/></svg><svg style="left:140px;top:143px" width="16" height="16" viewBox="0 0 16 16"><rect x="2" y="2" width="12" height="10.500" rx="1" fill="#fff" stroke="#2a7a2a" stroke-width="1.500"/><path d="M3.500 13.800h9" stroke="#508050" stroke-width="1.500"/><circle cx="6" cy="6" r="2.700" fill="#ff1020"/><path d="M8 7l5 4M13 7l-5 4" stroke="#000" stroke-width="1.200"/></svg><svg style="left:162px;top:143px" width="16" height="16" viewBox="0 0 16 16"><rect x="1.500" y="1.500" width="13" height="11" rx="2" fill="#f4f4f4" stroke="#2a7a2a" stroke-width="1.600"/><path d="M3 14h10" stroke="#508050" stroke-width="1.500"/><path d="M4 5h2.500M7 5h2.500M10 5h2.500M4 7.500h2.500M7 7.500h2.500M10 7.500h2.500M4 10h2.500M7 10h2.500M10 10h2.500" stroke="#505050" stroke-width="1.500"/></svg><svg style="left:186px;top:143px" width="16" height="16" viewBox="0 0 16 16"><path d="M1.500 1.500l13 13" stroke="#2a7a2a" stroke-width="1.200"/><circle cx="8" cy="8" r="4.800" fill="#70c890" stroke="#1a6a3a" stroke-width="1.400"/><circle cx="8" cy="8" r="2.500" fill="#b0e8c0"/></svg><svg style="left:209px;top:143px" width="16" height="16" viewBox="0 0 16 16"><path d="M1 1.500h15M1 14h15" stroke="#3a9a3a" stroke-width="1"/><path d="M1.500 14l2.500-12.500 2.500 12.500 2.500-12.500 2.500 12.500 2.500-12.500 2 12.500" fill="none" stroke="#2a8a2a" stroke-width="1.600"/><circle cx="4" cy="1.500" r="0.900" fill="#3040d0"/><circle cx="9" cy="1.500" r="0.900" fill="#3040d0"/><circle cx="14" cy="1.500" r="0.900" fill="#3040d0"/><circle cx="1.500" cy="14" r="0.900" fill="#3040d0"/><circle cx="6.500" cy="14" r="0.900" fill="#3040d0"/><circle cx="11.500" cy="14" r="0.900" fill="#3040d0"/></svg><svg style="left:232px;top:143px" width="16" height="16" viewBox="0 0 16 16"><path d="M2 14.500c0-8 4-12 11.500-12.500" fill="none" stroke="#2a8a2a" stroke-width="1.600"/><path d="M14 3c1 3 1.500 7 1 11.500" fill="none" stroke="#2a8a2a" stroke-width="1.400"/><path d="M2.500 9l10 -6" stroke="#60b060" stroke-width="0.800" stroke-dasharray="1.500 1.500"/><circle cx="2" cy="14" r="1" fill="#3040d0"/><circle cx="3.500" cy="8" r="1" fill="#3040d0"/><circle cx="13.500" cy="2.500" r="1" fill="#3040d0"/><circle cx="15" cy="8" r="1" fill="#3040d0"/></svg><svg style="left:255px;top:143px" width="16" height="16" viewBox="0 0 16 16"><rect x="1" y="1.500" width="14" height="13" fill="#fff" stroke="#1a6a1a" stroke-width="1.500"/><path d="M5.700 1.500v13M10.300 1.500v13M1 6h14M1 10.200h14" stroke="#1a6a1a" stroke-width="1.400"/></svg><svg style="left:277px;top:143px" width="16" height="16" viewBox="0 0 16 16"><rect x="0.500" y="0.500" width="15" height="14" fill="#1468d8"/><path d="M5.300 0.500v14M10.300 0.500v14M0.500 5.200h15M0.500 9.800h15" stroke="#fff" stroke-width="0.900"/><g fill="#e8f0ff"><rect x="2" y="2" width="2" height="2"/><rect x="7" y="2" width="2" height="2"/><rect x="12" y="2" width="2" height="2"/><rect x="2" y="6.500" width="2" height="2"/><rect x="12" y="6.500" width="2" height="2"/><rect x="2" y="11" width="2" height="2"/><rect x="7" y="11" width="2" height="2"/><rect x="12" y="11" width="2" height="2"/></g><rect x="5.500" y="5.500" width="4.500" height="4" fill="#101060"/></svg><svg style="left:301px;top:143px" width="16" height="16" viewBox="0 0 16 16"><rect x="1.500" y="1.500" width="5.500" height="5" fill="#fff" stroke="#1a6a1a" stroke-width="1.200"/><rect x="9" y="1.500" width="5.500" height="5" fill="#fff" stroke="#1a6a1a" stroke-width="1.200"/><rect x="1.500" y="8.500" width="5.500" height="5.500" fill="#fff" stroke="#1a6a1a" stroke-width="1.200"/><rect x="9" y="8.500" width="5.500" height="5.500" fill="#fff" stroke="#1a6a1a" stroke-width="1.200"/><path d="M5 15.500l11-11.500" stroke="#ff1010" stroke-width="1.500"/></svg><svg style="left:330px;top:143px" width="16" height="16" viewBox="0 0 16 16"><circle cx="8" cy="8" r="6.800" fill="#fdfdfd" stroke="#808890" stroke-width="1"/><path d="M8 8.500l-3.500-4.500" stroke="#e02010" stroke-width="1.200"/><path d="M3 7l1.500.3M4.500 4l1 1M8 2.500v1.500M11.500 4l-1 1M13 7l-1.500.3" stroke="#e02010" stroke-width="1"/><path d="M3 11.500c3 2.500 7 2.500 10 0" stroke="#b0c8d8" stroke-width="1.500" fill="none"/></svg><div class="a" style="left:383px;top:143px;width:8px;height:15px;background:#c9c9c9"></div><div class="a" style="left:391px;top:143px;width:8px;height:15px;background:#d2a2d2"></div><svg style="left:383px;top:143px" width="16" height="15" viewBox="0 0 16 15"><text transform="translate(5.5 12) scale(0.820 1)" font-family="Liberation Sans,sans-serif" font-size="11" fill="#000" stroke="#000" stroke-width="0.350">1</text><circle cx="1.500" cy="7.500" r="1" fill="#000"/><circle cx="14.500" cy="7.500" r="1" fill="#000"/></svg><div class="a" style="left:406px;top:143px;width:8px;height:15px;background:#c9c9c9"></div><div class="a" style="left:414px;top:143px;width:8px;height:15px;background:#d2a2d2"></div><svg style="left:406px;top:143px" width="16" height="15" viewBox="0 0 16 15"><text transform="translate(3.75 12) scale(0.697 1)" font-family="Liberation Sans,sans-serif" font-size="11" fill="#000" stroke="#000" stroke-width="0.350">10</text><circle cx="1.500" cy="7.500" r="1" fill="#000"/><circle cx="14.500" cy="7.500" r="1" fill="#000"/></svg><div class="a" style="left:429px;top:143px;width:8px;height:15px;background:#c9c9c9"></div><div class="a" style="left:437px;top:143px;width:8px;height:15px;background:#d2a2d2"></div><svg style="left:429px;top:143px" width="16" height="15" viewBox="0 0 16 15"><text transform="translate(2.75 12) scale(0.574 1)" font-family="Liberation Sans,sans-serif" font-size="11" fill="#000" stroke="#000" stroke-width="0.350">100</text><circle cx="1.500" cy="7.500" r="1" fill="#000"/><circle cx="14.500" cy="7.500" r="1" fill="#000"/></svg><div class="a" style="left:452px;top:143px;width:8px;height:15px;background:#c9c9c9"></div><div class="a" style="left:460px;top:143px;width:8px;height:15px;background:#d2a2d2"></div><svg style="left:452px;top:143px" width="16" height="15" viewBox="0 0 16 15"><text transform="translate(2.5 12) scale(0.451 1)" font-family="Liberation Sans,sans-serif" font-size="11" fill="#000" stroke="#000" stroke-width="0.350">1000</text><circle cx="1.500" cy="7.500" r="1" fill="#000"/><circle cx="14.500" cy="7.500" r="1" fill="#000"/></svg><div class="a" style="left:475px;top:143px;width:8px;height:15px;background:#c9c9c9"></div><div class="a" style="left:483px;top:143px;width:8px;height:15px;background:#d2a2d2"></div><svg style="left:475px;top:143px" width="16" height="15" viewBox="0 0 16 15"><circle cx="8" cy="5.500" r="3.600" fill="#ff1010"/><path d="M5 9.500l6 5M11 9.500l-6 5" stroke="#000" stroke-width="1.200"/><circle cx="1.500" cy="6" r="0.900" fill="#000"/><circle cx="14.500" cy="6" r="0.900" fill="#000"/></svg><div class="a" style="left:498px;top:143px;width:8px;height:15px;background:#c9c9c9"></div><div class="a" style="left:506px;top:143px;width:8px;height:15px;background:#d2a2d2"></div><svg style="left:498px;top:143px" width="16" height="15" viewBox="0 0 16 15"><rect x="3.500" y="3" width="2.500" height="10" fill="#e04020"/><rect x="6" y="3" width="2.500" height="10" fill="#f0c020"/><rect x="8.500" y="3" width="2.500" height="10" fill="#3060d0"/><rect x="11" y="3" width="2" height="10" fill="#a030a0"/><rect x="3.500" y="3" width="9.500" height="10" fill="none" stroke="#404040" stroke-width="0.700"/><circle cx="1.500" cy="8" r="0.900" fill="#000"/><circle cx="14.800" cy="8" r="0.900" fill="#000"/></svg><div class="a" style="left:521px;top:143px;width:8px;height:15px;background:#c9c9c9"></div><div class="a" style="left:529px;top:143px;width:8px;height:15px;background:#d2a2d2"></div><svg style="left:521px;top:143px" width="16" height="15" viewBox="0 0 16 15"><path d="M2 8l6-4 6 4-6 4z" fill="#e8c8e0" stroke="#a040a0" stroke-width="1"/><circle cx="8" cy="8" r="1.600" fill="#d02020"/><path d="M3 5l10 6M13 5l-10 6" stroke="#806080" stroke-width="0.600"/></svg><svg style="left:552px;top:143px" width="16" height="16" viewBox="0 0 16 16"><path d="M2.500 2l2.500 11 3-10 3 10 2.500-11" fill="none" stroke="#2a9a3a" stroke-width="1.700"/><path d="M3.500 3l2 8M12 3l-2 8" stroke="#60a0b0" stroke-width="0.800"/><g fill="#1010b0"><rect x="1.300" y="1" width="2.200" height="2.200"/><rect x="6.800" y="1" width="2.200" height="2.200"/><rect x="11.800" y="1" width="2.200" height="2.200"/><rect x="4" y="12" width="2.200" height="2.200"/><rect x="9.500" y="12" width="2.200" height="2.200"/></g><path d="M1.500 9h12" stroke="#000" stroke-width="1.100"/><path d="M0 9l3-2.200v4.400zM15 9l-3-2.200v4.400z" fill="#000"/></svg><svg style="left:581px;top:143px" width="16" height="16" viewBox="0 0 16 16"><path d="M2.500 2c-2 3.500-2 7.500 0 11" fill="none" stroke="#2a8a3a" stroke-width="1.500"/><path d="M8.500 2v11M14 2v11" stroke="#1a7a2a" stroke-width="1.500"/><path d="M8.500 5.500h5.500M8.500 9.500h5.500" stroke="#2a8a3a" stroke-width="1.800"/><path d="M9 5l5 5M14 5l-5 5" stroke="#5aaa6a" stroke-width="0.800"/><g fill="#1010b0"><rect x="1.300" y="1" width="2.200" height="2.200"/><rect x="1.300" y="12" width="2.200" height="2.200"/><rect x="7.400" y="1" width="2.200" height="2.200"/><rect x="12.900" y="1" width="2.200" height="2.200"/><rect x="7.400" y="12" width="2.200" height="2.200"/><rect x="12.900" y="12" width="2.200" height="2.200"/></g><path d="M4 6l2.500 1.700-2.500 1.700z" fill="#000"/></svg><svg style="left:352px;top:143px" width="20" height="16" viewBox="0 0 20 16"><text x="1.500" y="14.500" font-family="Liberation Sans,sans-serif" font-weight="bold" font-size="16" fill="#6cc8a0" stroke="#2a8060" stroke-width="0.900" textLength="17" lengthAdjust="spacingAndGlyphs">3D</text></svg><div class="a" style="left:10px;top:141px;width:24px;height:3px;border-left:1px solid #fff;border-right:1px solid #a0a0a0;border-top:1px solid #fff;border-bottom:1px solid #a0a0a0;background:#f0f0f0"></div><div class="a" style="left:10px;top:145px;width:24px;height:3px;border-left:1px solid #fff;border-right:1px solid #a0a0a0;border-top:1px solid #fff;border-bottom:1px solid #a0a0a0;background:#f0f0f0"></div><div class="a" style="left:9px;top:329px;width:26px;height:1px;background:#a0a0a0"></div><div class="a" style="left:9px;top:330px;width:26px;height:1px;background:#fff"></div><div class="a" style="left:10px;top:332px;width:24px;height:3px;border-left:1px solid #fff;border-right:1px solid #a0a0a0;border-top:1px solid #fff;border-bottom:1px solid #a0a0a0;background:#f0f0f0"></div><div class="a" style="left:10px;top:336px;width:24px;height:3px;border-left:1px solid #fff;border-right:1px solid #a0a0a0;border-top:1px solid #fff;border-bottom:1px solid #a0a0a0;background:#f0f0f0"></div><div class="a" style="left:9px;top:498px;width:26px;height:1px;background:#a0a0a0"></div><div class="a" style="left:9px;top:499px;width:26px;height:1px;background:#fff"></div><div class="a" style="left:10px;top:501px;width:24px;height:3px;border-left:1px solid #fff;border-right:1px solid #a0a0a0;border-top:1px solid #fff;border-bottom:1px solid #a0a0a0;background:#f0f0f0"></div><div class="a" style="left:10px;top:505px;width:24px;height:3px;border-left:1px solid #fff;border-right:1px solid #a0a0a0;border-top:1px solid #fff;border-bottom:1px solid #a0a0a0;background:#f0f0f0"></div><div class="a" style="left:9px;top:645px;width:26px;height:1px;background:#a0a0a0"></div><div class="a" style="left:9px;top:646px;width:26px;height:1px;background:#fff"></div><div class="a" style="left:10px;top:648px;width:24px;height:3px;border-left:1px solid #fff;border-right:1px solid #a0a0a0;border-top:1px solid #fff;border-bottom:1px solid #a0a0a0;background:#f0f0f0"></div><div class="a" style="left:10px;top:652px;width:24px;height:3px;border-left:1px solid #fff;border-right:1px solid #a0a0a0;border-top:1px solid #fff;border-bottom:1px solid #a0a0a0;background:#f0f0f0"></div><svg style="left:13.5px;top:153px" width="16" height="16" viewBox="0 0 16 16"><path d="M2 13.500l1.500-4 9-8.500 2.500 2.500-9 8.500z" fill="#e8e8f8" stroke="#2a2a8c" stroke-width="1.200"/><path d="M2 13.500l1.500-4 2.500 2.500z" fill="#2a2a8c"/><path d="M4 10l8.500-8" stroke="#2a2a8c" stroke-width="1.600"/></svg><svg style="left:13.5px;top:175px" width="16" height="16" viewBox="0 0 16 16"><rect x="2" y="2" width="12.500" height="11.500" fill="#d4d4d8" stroke="#3030a8" stroke-width="2"/></svg><svg style="left:13.5px;top:197px" width="16" height="16" viewBox="0 0 16 16"><circle cx="8.200" cy="7.500" r="6" fill="none" stroke="#2a2a8c" stroke-width="2"/></svg><svg style="left:13.5px;top:219px" width="16" height="16" viewBox="0 0 16 16"><rect x="1.500" y="1.500" width="9.500" height="12" fill="#3848d0" stroke="#202080" stroke-width="1"/><circle cx="6" cy="5" r="1.800" fill="#ffff20"/><path d="M6 7.500l2.500 5h-5z" fill="#ffff20"/><path d="M11.500 10h3.500M13 8l2.500 2-2.500 2z" fill="#000" stroke="#000" stroke-width="1"/></svg><svg style="left:13.5px;top:241px" width="16" height="16" viewBox="0 0 16 16"><path d="M2.500 2h9v11h-10z" fill="#ffffc0" stroke="#303090" stroke-width="1"/><path d="M4 4.500v0M4 7.500v0M4 10.500v0M9 4.500v0M9 7.500v0M9 10.500v0M6.500 4.500v0M6.500 10.500v0" stroke="#303090" stroke-width="1.400" stroke-linecap="round"/><path d="M8.500 9.500l5.500-8.500 1.500 1-5.500 8.500-2 1z" fill="#c8d0f0" stroke="#303090" stroke-width="0.900"/></svg><svg style="left:13.5px;top:263px" width="16" height="16" viewBox="0 0 16 16"><text x="0.500" y="13.500" font-family="Liberation Serif,serif" font-weight="bold" font-size="17" fill="#f02000">T</text><path d="M10 10.500h5M12.500 8v5" stroke="#000" stroke-width="1.200"/></svg><svg style="left:13.5px;top:285px" width="16" height="16" viewBox="0 0 16 16"><path d="M11 3c-6-2.500-9.500 1-9 4.500s4 6 9 3.500" fill="none" stroke="#0030a0" stroke-width="3"/><path d="M11 4.500l4 3-4 3z" fill="#000"/></svg><svg style="left:13.5px;top:307px" width="16" height="16" viewBox="0 0 16 16"><path d="M7.500 1l2 4.500 4.500.5-3.300 3.200 1 4.800-4.200-2.500-4.200 2.500 1-4.800-3.300-3.200 4.500-.5z" fill="#f4d8cc" stroke="#5858b0" stroke-width="1"/><path d="M14.500 2v11" stroke="#4040c0" stroke-width="1" stroke-dasharray="2 1.500"/></svg><svg style="left:13.5px;top:344px" width="16" height="16" viewBox="0 0 16 16"><path d="M2 2c3-2 9-2 12.500 0l-2.500 10.500-2.500-2-1.700 3-1.800-3-2.500 2z" fill="#98c8e8" stroke="#284890" stroke-width="1"/><path d="M8 1v9M5 1.500l1.500 8M11 1.500l-1.500 8" stroke="#d8f0ff" stroke-width="0.900"/></svg><svg style="left:13.5px;top:366px" width="16" height="16" viewBox="0 0 16 16"><path d="M1.500 13l2.300-12 2.200 12 2.200-12 2.200 12 2.200-12 2 12" fill="none" stroke="#3050b0" stroke-width="1.700"/><path d="M1.500 1h12M1.500 13h12.500" stroke="#60a0d8" stroke-width="0.800"/></svg><svg style="left:13.5px;top:388px" width="16" height="16" viewBox="0 0 16 16"><path d="M1.500 2l12 4.500-11 5.500 11 3" fill="none" stroke="#2840b0" stroke-width="1.800"/><circle cx="1.500" cy="2" r="1" fill="#60b0e8"/><circle cx="13.500" cy="6.500" r="1" fill="#60b0e8"/><circle cx="2.500" cy="12" r="1" fill="#60b0e8"/><circle cx="13.500" cy="15" r="1" fill="#60b0e8"/></svg><svg style="left:13.5px;top:409px" width="16" height="16" viewBox="0 0 16 16"><path d="M2 13c-1-4 1-8 3.500-8.500s0 5 3 4 1-6 3.500-7 1.500 3 1 4.500" fill="none" stroke="#2840b0" stroke-width="1.500"/><path d="M2.500 9v0M3 12v0M3.500 14v0" stroke="#2840b0" stroke-width="1.200" stroke-linecap="round"/></svg><svg style="left:13.5px;top:431px" width="16" height="16" viewBox="0 0 16 16"><g transform="translate(13 14.500) rotate(-72)"><text x="0" y="0" font-family="Liberation Sans,sans-serif" font-weight="bold" font-size="15" fill="#2040a0" stroke="#2040a0" stroke-width="1">B</text></g></svg><svg style="left:13.5px;top:452px" width="16" height="16" viewBox="0 0 16 16"><path d="M1 3l2 5 2-3.500 1.500 3.500 1.700-4 1.800 4 1.500-3.500 2 3.500 2-5v9.500l-2.500-3-2 2.500-2-2.500-1.500 2.500-2-2.500-2 2.500-2.500 3z" fill="#2840b0"/></svg><svg style="left:13.5px;top:475px" width="16" height="16" viewBox="0 0 16 16"><path d="M2.500 14v-12.500M5 14v-11M7.500 14v-9.500M10 14v-8M12.500 14v-11" stroke="#204080" stroke-width="1"/><path d="M3.500 14v-12M6 14v-10M8.500 14v-9" stroke="#30b0c0" stroke-width="0.800"/><path d="M1.500 14.500h12.500" stroke="#101040" stroke-width="1.200"/><path d="M2.500 1.500c4 1 6 3 10 1.500" stroke="#204080" stroke-width="0.900" fill="none"/></svg><svg style="left:13.5px;top:513px" width="16" height="16" viewBox="0 0 16 16"><text x="0" y="13" font-family="Liberation Serif,serif" font-weight="bold" font-size="12" fill="#e02810" >a</text><text x="5" y="13" font-family="Liberation Serif,serif" font-weight="bold" font-size="16.5" fill="#e02810" >A</text></svg><svg style="left:13.5px;top:535px" width="16" height="16" viewBox="0 0 16 16"><text x="0" y="13.5" font-family="Liberation Serif,serif" font-weight="bold" font-size="13" fill="#e02810" >a</text><text x="7.500" y="9" font-family="Liberation Serif,serif" font-weight="bold" font-size="11" fill="#e02810" transform="rotate(-15 10 6)">a</text><path d="M4 15l11.500-7" stroke="#901010" stroke-width="1.100"/></svg><svg style="left:13.5px;top:558px" width="16" height="16" viewBox="0 0 16 16"><path d="M1 14.500c3.500-4 10.500-4 14 0" fill="none" stroke="#e02810" stroke-width="1.100"/><text x="1.500" y="10" font-family="Liberation Serif,serif" font-weight="bold" font-size="7" fill="#e02810" transform="rotate(-25 3 9)">A</text><text x="6" y="7.500" font-family="Liberation Serif,serif" font-weight="bold" font-size="7" fill="#e02810">B</text><text x="11" y="8" font-family="Liberation Serif,serif" font-weight="bold" font-size="7" fill="#e02810" transform="rotate(25 13 7)">C</text></svg><svg style="left:13.5px;top:578px" width="16" height="16" viewBox="0 0 16 16"><text x="0" y="15" font-family="Liberation Serif,serif" font-weight="bold" font-size="17.5" fill="#e02810" >A</text><circle cx="12" cy="4.500" r="3" fill="none" stroke="#d04030" stroke-width="0.900"/></svg><svg style="left:13.5px;top:601px" width="16" height="16" viewBox="0 0 16 16"><text x="1" y="12.500" font-family="Liberation Sans,sans-serif" font-weight="bold" font-size="13" fill="#e02810" stroke="#e02810" stroke-width="0.500" textLength="14" lengthAdjust="spacingAndGlyphs">ABC</text></svg><svg style="left:13.5px;top:622px" width="16" height="16" viewBox="0 0 16 16"><rect x="1.500" y="2.500" width="13" height="12" fill="#fff0ec" stroke="#e05040" stroke-width="1.200"/><text x="3.5" y="13.5" font-family="Liberation Serif,serif" font-weight="bold" font-size="13" fill="#e02810" >A</text></svg><svg style="left:13px;top:659px;overflow:hidden" width="17" height="12" viewBox="0 0 17 12"><circle cx="8.500" cy="8.500" r="6.800" fill="#f8d8d0" stroke="#d020a0" stroke-width="2"/><path d="M8.500 8.500v7M8.500 8.500l-5.500-4M8.500 8.500l5.500-4" stroke="#d020a0" stroke-width="1.600"/></svg><svg style="left:0;top:0" width="960" height="725" viewBox="0 0 960 725"><polygon points="697.7,210.9 339.1,70.8 341.1,65.7 325.0,67.0 336.0,78.8 337.9,73.8 696.7,213.5" fill="#000" opacity="0.38" filter="url(#sh)" transform="translate(4,5)"/><polygon points="80.8,288.2 111.0,80.1 116.4,80.9 111.5,65.5 102.5,78.9 107.8,79.6 78.0,287.8" fill="#000" opacity="0.38" filter="url(#sh)" transform="translate(4,5)"/><polygon points="116.5,410.6 329.4,334.0 331.2,339.0 342.5,327.5 326.5,325.8 328.3,330.9 115.5,408.0" fill="#000" opacity="0.38" filter="url(#sh)" transform="translate(4,5)"/><polygon points="697.7,210.9 339.1,70.8 341.1,65.7 325.0,67.0 336.0,78.8 337.9,73.8 696.7,213.5" fill="#c40000"/><polygon points="80.8,288.2 111.0,80.1 116.4,80.9 111.5,65.5 102.5,78.9 107.8,79.6 78.0,287.8" fill="#c40000"/><polygon points="116.5,410.6 329.4,334.0 331.2,339.0 342.5,327.5 326.5,325.8 328.3,330.9 115.5,408.0" fill="#c40000"/></svg><div class="t" style="left:622.5px;top:226.0px;font-size:17.5px;letter-spacing:0.656px;color:#363636;text-shadow:1px 1px 1.5px rgba(0,0,0,0.13);">1. выбираем шрифт</div><div class="t" style="left:55.0px;top:289.8px;font-size:17.5px;letter-spacing:0.470px;color:#363636;text-shadow:1px 1px 1.5px rgba(0,0,0,0.13);">2. пишем</div><div class="t" style="left:48.0px;top:311.5px;font-size:17.5px;letter-spacing:1.287px;color:#363636;text-shadow:1px 1px 1.5px rgba(0,0,0,0.13);">"ПРИВЕТ"</div><div class="t" style="left:131.0px;top:413.2px;font-size:17.5px;letter-spacing:0.887px;color:#363636;text-shadow:1px 1px 1.5px rgba(0,0,0,0.13);">3. Результат</div></div></body></html>
